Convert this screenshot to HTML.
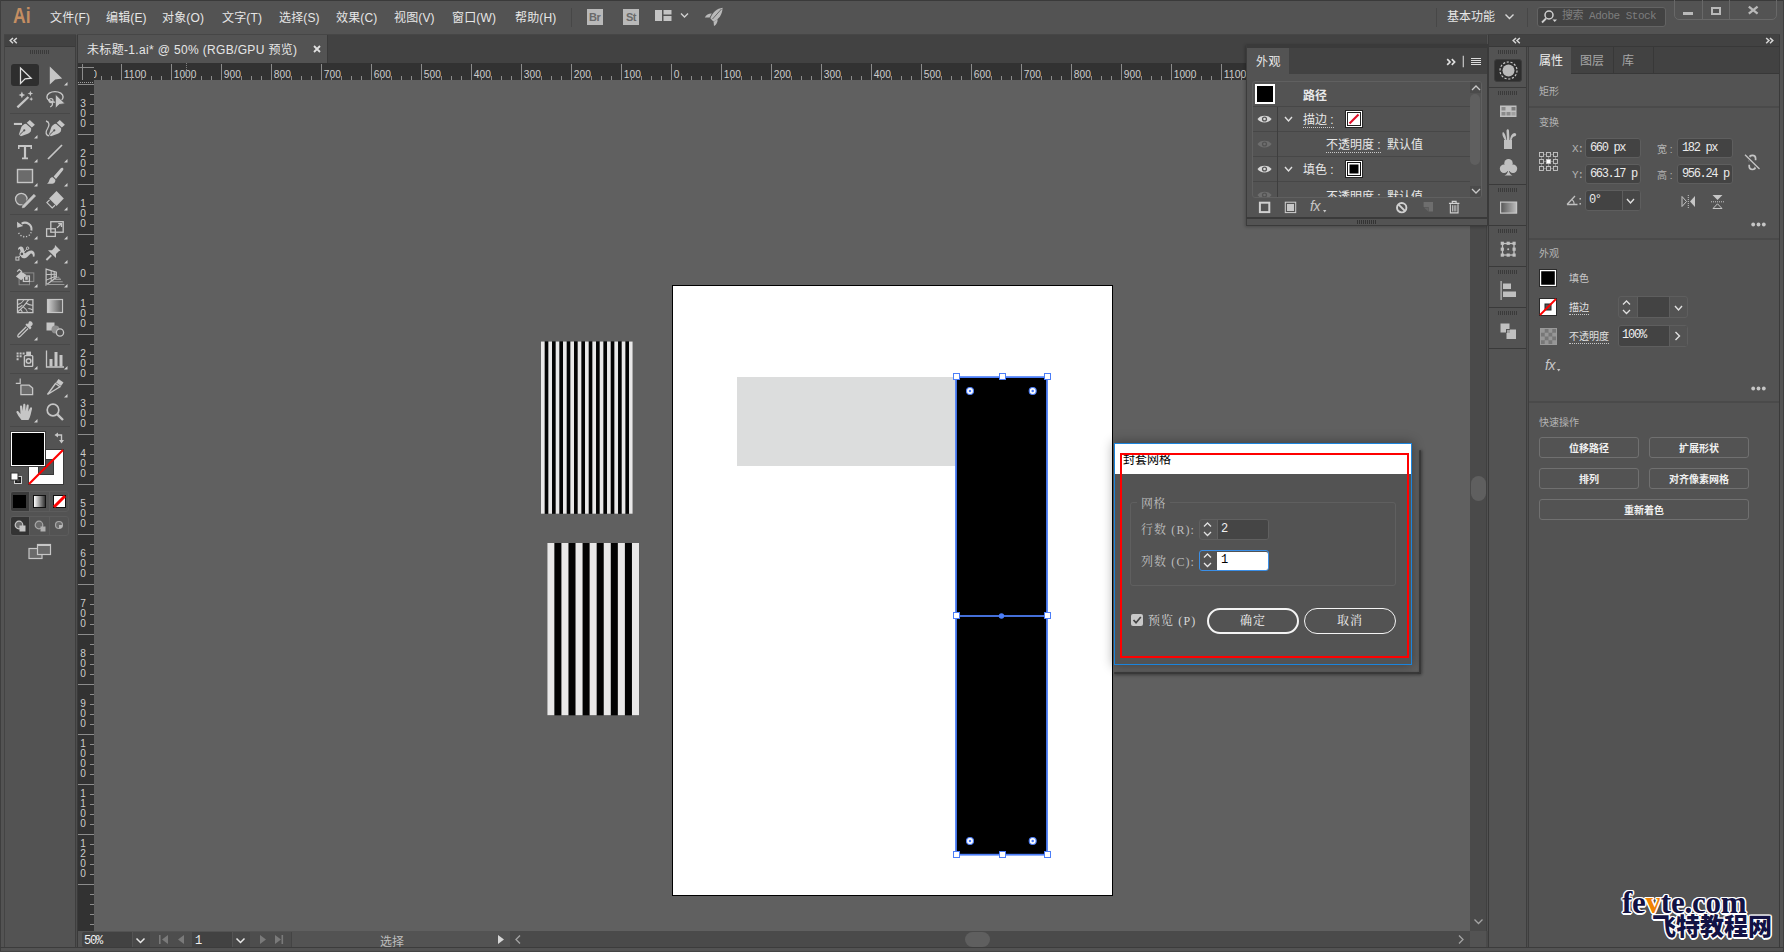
<!DOCTYPE html>
<html lang="zh-CN"><head><meta charset="utf-8"><title>Illustrator</title>
<style>
*{margin:0;padding:0;box-sizing:border-box}
html,body{width:1784px;height:952px;overflow:hidden;background:#535353;font-family:"Liberation Sans","Noto Sans CJK SC",sans-serif;font-size:12px;color:#ddd}
body div,body svg{position:absolute}
svg{overflow:visible}
svg text{font-family:"Liberation Sans","Noto Sans CJK SC",sans-serif}
</style></head>
<body>
<div style="left:0px;top:0px;width:1784px;height:1px;background:#3a3a3a;"></div>
<div style="left:0px;top:0px;width:1px;height:952px;background:#3e3e3e;"></div>
<div style="left:1783px;top:0px;width:1px;height:952px;background:#3e3e3e;"></div>
<div style="left:0px;top:951px;width:1784px;height:1px;background:#444;"></div>
<div style="left:12.5px;top:3px;font-size:22px;color:#c48e62;line-height:26px;white-space:nowrap;font-family:'Liberation Sans','Noto Sans CJK SC',sans-serif;font-weight:bold;line-height:26px;transform:scaleX(0.8);transform-origin:0 0;">Ai</div>
<div style="left:50px;top:10px;font-size:12px;color:#e6e6e6;line-height:16px;white-space:nowrap;font-family:'Liberation Sans','Noto Sans CJK SC',sans-serif;line-height:17px;letter-spacing:0.15px;">文件(F)</div>
<div style="left:106px;top:10px;font-size:12px;color:#e6e6e6;line-height:16px;white-space:nowrap;font-family:'Liberation Sans','Noto Sans CJK SC',sans-serif;line-height:17px;letter-spacing:0.15px;">编辑(E)</div>
<div style="left:162px;top:10px;font-size:12px;color:#e6e6e6;line-height:16px;white-space:nowrap;font-family:'Liberation Sans','Noto Sans CJK SC',sans-serif;line-height:17px;letter-spacing:0.15px;">对象(O)</div>
<div style="left:222px;top:10px;font-size:12px;color:#e6e6e6;line-height:16px;white-space:nowrap;font-family:'Liberation Sans','Noto Sans CJK SC',sans-serif;line-height:17px;letter-spacing:0.15px;">文字(T)</div>
<div style="left:279px;top:10px;font-size:12px;color:#e6e6e6;line-height:16px;white-space:nowrap;font-family:'Liberation Sans','Noto Sans CJK SC',sans-serif;line-height:17px;letter-spacing:0.15px;">选择(S)</div>
<div style="left:336px;top:10px;font-size:12px;color:#e6e6e6;line-height:16px;white-space:nowrap;font-family:'Liberation Sans','Noto Sans CJK SC',sans-serif;line-height:17px;letter-spacing:0.15px;">效果(C)</div>
<div style="left:394px;top:10px;font-size:12px;color:#e6e6e6;line-height:16px;white-space:nowrap;font-family:'Liberation Sans','Noto Sans CJK SC',sans-serif;line-height:17px;letter-spacing:0.15px;">视图(V)</div>
<div style="left:452px;top:10px;font-size:12px;color:#e6e6e6;line-height:16px;white-space:nowrap;font-family:'Liberation Sans','Noto Sans CJK SC',sans-serif;line-height:17px;letter-spacing:0.15px;">窗口(W)</div>
<div style="left:515px;top:10px;font-size:12px;color:#e6e6e6;line-height:16px;white-space:nowrap;font-family:'Liberation Sans','Noto Sans CJK SC',sans-serif;line-height:17px;letter-spacing:0.15px;">帮助(H)</div>
<div style="left:571px;top:8px;width:1px;height:19px;background:#474747;"></div>
<div style="left:587px;top:9px;width:16px;height:16px;background:#b9b9b9;"><span style="position:absolute;left:2px;top:2px;font-size:11px;line-height:13px;font-weight:bold;color:#6a6a6a;letter-spacing:-0.5px">Br</span></div>
<div style="left:623px;top:9px;width:16px;height:16px;background:#b9b9b9;"><span style="position:absolute;left:3px;top:2px;font-size:11px;line-height:13px;font-weight:bold;color:#6a6a6a;letter-spacing:-0.5px">St</span></div>
<svg style="left:654px;top:9px" width="40" height="14"><rect x="1" y="1" width="7" height="11" fill="#c4c4c4"/><rect x="9.5" y="1" width="8" height="4.5" fill="#c4c4c4"/><rect x="9.5" y="7" width="8" height="5" fill="#c4c4c4"/><path d="M27 4.5 L30.5 8 L34 4.5" fill="none" stroke="#d0d0d0" stroke-width="1.4"/></svg>
<svg style="left:704px;top:7px" width="20" height="20" viewBox="0 0 20 20"><path d="M18.6 0.8 C13 1.5 8.5 5.5 6.3 11.3 L9.3 14.6 C15 12.6 18.3 7.5 18.6 0.8 Z" fill="#b9b9b9"/><path d="M7.8 6.6 C4.8 6.4 2.2 8 0.8 10.4 L5.6 10.6 Z" fill="#b9b9b9"/><path d="M13.6 12.2 C13.8 15.2 12.3 17.8 10 19 L9.6 14.8 Z" fill="#b9b9b9"/><path d="M17.5 2 L8.5 12" stroke="#535353" stroke-width="0.8"/></svg>
<div style="left:1436px;top:8px;width:1px;height:19px;background:#474747;"></div>
<div style="left:1447px;top:9px;font-size:12px;color:#e6e6e6;line-height:16px;white-space:nowrap;font-family:'Liberation Sans','Noto Sans CJK SC',sans-serif;line-height:17px;">基本功能</div>
<svg style="left:1504px;top:13px" width="12" height="8"><path d="M1.5 1.5 L5.5 5.5 L9.5 1.5" fill="none" stroke="#d8d8d8" stroke-width="1.4"/></svg>
<div style="left:1527px;top:8px;width:1px;height:19px;background:#474747;"></div>
<div style="left:1537px;top:7px;width:129px;height:20px;background:#434343;border:1px solid #636363;border-radius:3px;"></div>
<svg style="left:1540px;top:9px" width="18" height="16"><circle cx="9" cy="6" r="4" fill="none" stroke="#d0d0d0" stroke-width="1.5"/><path d="M6 9.5 L2 13.5" stroke="#d0d0d0" stroke-width="1.8"/><path d="M12.5 10.5 L17 10.5 L14.75 13 Z" fill="#d0d0d0"/></svg>
<div style="left:1562px;top:9px;font-size:11px;color:#7e7e7e;line-height:15px;white-space:nowrap;font-family:'Liberation Mono','Noto Sans CJK SC',monospace;line-height:15px;letter-spacing:-0.5px;">搜索 Adobe Stock</div>
<div style="left:1674px;top:-2px;width:103px;height:22px;border:1px solid #686868;border-radius:0 0 5px 5px;"></div>
<div style="left:1702px;top:0px;width:1px;height:19px;background:#686868;"></div>
<div style="left:1729px;top:0px;width:1px;height:19px;background:#686868;"></div>
<div style="left:1683px;top:12px;width:10px;height:3px;background:#b9b9b9;"></div>
<div style="left:1711px;top:7px;width:10px;height:8px;border:2px solid #b9b9b9;"></div>
<svg style="left:1747px;top:5px" width="12" height="10"><path d="M1.8 1.6 L10.6 8.6 M10.6 1.6 L1.8 8.6" stroke="#b9b9b9" stroke-width="2.3"/></svg>
<div style="left:4px;top:34px;width:72px;height:1px;background:#464646;"></div>
<div style="left:77px;top:34px;width:1411px;height:1px;background:#464646;"></div>
<div style="left:1488px;top:34px;width:292px;height:1px;background:#404040;"></div>
<div style="left:4px;top:35px;width:1px;height:913px;background:#444;"></div>
<div style="left:75px;top:35px;width:1px;height:913px;background:#3e3e3e;"></div>
<div style="left:76px;top:35px;width:1px;height:913px;background:#4d4d4d;"></div>
<div style="left:5px;top:35px;width:70px;height:12px;background:#424242;"></div>
<div style="left:5px;top:46px;width:70px;height:1px;background:#3a3a3a;"></div>
<svg style="left:9px;top:37px" width="10" height="8"><path d="M4 1 L1.2 3.6 L4 6.2 M7.8 1 L5 3.6 L7.8 6.2" fill="none" stroke="#d6d6d6" stroke-width="1.5"/></svg>
<svg style="left:30px;top:50px" width="20" height="4"><rect x="0" y="0" width="1" height="4" fill="#3a3a3a"/><rect x="2" y="0" width="1" height="4" fill="#3a3a3a"/><rect x="4" y="0" width="1" height="4" fill="#3a3a3a"/><rect x="6" y="0" width="1" height="4" fill="#3a3a3a"/><rect x="8" y="0" width="1" height="4" fill="#3a3a3a"/><rect x="10" y="0" width="1" height="4" fill="#3a3a3a"/><rect x="12" y="0" width="1" height="4" fill="#3a3a3a"/><rect x="14" y="0" width="1" height="4" fill="#3a3a3a"/><rect x="16" y="0" width="1" height="4" fill="#3a3a3a"/><rect x="18" y="0" width="1" height="4" fill="#3a3a3a"/></svg>
<div style="left:11px;top:64px;width:28px;height:22px;background:#2e2e2e;border-radius:3px;"></div>
<svg style="left:13px;top:63px" width="24" height="24" viewBox="0 0 24 24"><path d="M7.5 5 V20.4 L12.1 15.9 L18.2 15.2 Z" fill="none" stroke="#e0e0e0" stroke-width="1.25" stroke-linejoin="miter"/></svg>
<svg style="left:43px;top:63px" width="24" height="24" viewBox="0 0 24 24"><path d="M6.8 3.6 V21.5 L12.2 16.4 L19.2 15.5 Z" fill="#c6c6c6"/></svg>
<svg style="left:64.3px;top:81.6px" width="4" height="4"><path d="M3.5 0 V3.5 H0 Z" fill="#d0d0d0"/></svg>
<svg style="left:13px;top:88px" width="24" height="24" viewBox="0 0 24 24"><path d="M4.4 19.4 L15.4 9" stroke="#c6c6c6" stroke-width="2.3"/><path d="M8.9 3.6 L9.9 5.9 L12.2 6.9 L9.9 7.9 L8.9 10.2 L7.9 7.9 L5.6 6.9 L7.9 5.9 Z" fill="#c6c6c6"/><path d="M17.4 2.7 L18.2 4.7 L20.2 5.5 L18.2 6.3 L17.4 8.3 L16.6 6.3 L14.6 5.5 L16.6 4.7 Z" fill="#c6c6c6"/><path d="M18.2 9.1 L18.8 10.5 L20.2 11.1 L18.8 11.7 L18.2 13.1 L17.6 11.7 L16.2 11.1 L17.6 10.5 Z" fill="#c6c6c6"/></svg>
<svg style="left:43px;top:88px" width="24" height="24" viewBox="0 0 24 24"><ellipse cx="12" cy="8.9" rx="8.1" ry="5.3" fill="none" stroke="#c6c6c6" stroke-width="1.4"/><circle cx="8" cy="12.6" r="2" fill="none" stroke="#c6c6c6" stroke-width="1.2"/><path d="M9 14.4 C10.2 16.2 9.2 18.2 7.2 18.9" fill="none" stroke="#c6c6c6" stroke-width="1.3"/><path d="M12.3 6 V20.6 L16.3 16.5 L22.2 15.7 Z" fill="#c6c6c6" stroke="#535353" stroke-width="0.9"/></svg>
<svg style="left:13px;top:116px" width="24" height="24" viewBox="0 0 24 24"><rect x="0.9" y="6.9" width="8.1" height="2.1" fill="#c6c6c6"/><path d="M16.8 3.9 L21.9 8.7 L18.8 11.4 L13.7 6.8 Z" fill="#c6c6c6"/><path d="M13.0 7.7 L18.1 12.3 C18.5 14.6 17.4 16.6 15.4 17.5 L8 20.3 L5.8 18.7 L8.2 11.4 C9 9.3 10.9 7.9 13.0 7.7 Z" fill="#c6c6c6"/><path d="M6.4 19.1 L11 14.6" stroke="#535353" stroke-width="1"/><circle cx="11.3" cy="14.3" r="1.1" fill="#535353"/></svg>
<svg style="left:34.3px;top:134.6px" width="4" height="4"><path d="M3.5 0 V3.5 H0 Z" fill="#d0d0d0"/></svg>
<svg style="left:43px;top:116px" width="24" height="24" viewBox="0 0 24 24"><path d="M16.8 3.9 L21.9 8.7 L18.8 11.4 L13.7 6.8 Z" fill="#c6c6c6"/><path d="M13.0 7.7 L18.1 12.3 C18.5 14.6 17.4 16.6 15.4 17.5 L8 20.3 L5.8 18.7 L8.2 11.4 C9 9.3 10.9 7.9 13.0 7.7 Z" fill="#c6c6c6"/><path d="M6.4 19.1 L11 14.6" stroke="#535353" stroke-width="1"/><circle cx="11.3" cy="14.3" r="1.1" fill="#535353"/><path d="M3 5 C6.8 6 6.5 9.5 4.6 12.5 C2.6 15.5 2.2 19.3 6.2 19.8" fill="none" stroke="#c6c6c6" stroke-width="1.3"/></svg>
<svg style="left:13px;top:140px" width="24" height="24" viewBox="0 0 24 24"><path d="M5 5 H19 V9 H17.5 V7 H13.1 V17.6 H15 V19.2 H9 V17.6 H10.9 V7 H6.5 V9 H5 Z" fill="#c6c6c6"/></svg>
<svg style="left:34.3px;top:158.6px" width="4" height="4"><path d="M3.5 0 V3.5 H0 Z" fill="#d0d0d0"/></svg>
<svg style="left:43px;top:140px" width="24" height="24" viewBox="0 0 24 24"><path d="M5 19 L19 5" stroke="#c6c6c6" stroke-width="1.7"/></svg>
<svg style="left:64.3px;top:158.6px" width="4" height="4"><path d="M3.5 0 V3.5 H0 Z" fill="#d0d0d0"/></svg>
<svg style="left:13px;top:164px" width="24" height="24" viewBox="0 0 24 24"><rect x="4.5" y="5.5" width="15" height="13" fill="#6b6b6b" stroke="#c6c6c6" stroke-width="1.4"/></svg>
<svg style="left:34.3px;top:182.6px" width="4" height="4"><path d="M3.5 0 V3.5 H0 Z" fill="#d0d0d0"/></svg>
<svg style="left:43px;top:164px" width="24" height="24" viewBox="0 0 24 24"><path d="M10.6 12.5 L17.6 4.4 C18.6 3.2 20.6 3.6 20.4 5.2 C20.3 5.8 20 6.3 19.6 6.8 L13 15 Z" fill="#c6c6c6"/><path d="M9.8 13.3 L12.3 15.7 C12.8 18 11 19.8 8.5 19.8 L4 19.8 C6 18.5 6 16.5 6.8 15 C7.5 13.8 8.6 13.2 9.8 13.3 Z" fill="#c6c6c6"/></svg>
<svg style="left:64.3px;top:182.6px" width="4" height="4"><path d="M3.5 0 V3.5 H0 Z" fill="#d0d0d0"/></svg>
<svg style="left:13px;top:188px" width="24" height="24" viewBox="0 0 24 24"><circle cx="8.3" cy="11.1" r="5.8" fill="#6b6b6b" stroke="#c6c6c6" stroke-width="1.3"/><path d="M20.6 5.2 L23.6 8.2 L11.6 20.4 L8 21 L8.6 17.4 Z" fill="#535353"/><path d="M20.9 6.3 L22.6 8 L11.4 19.4 L9.2 19.8 L9.6 17.8 Z" fill="#c6c6c6" stroke="#c6c6c6" stroke-width="0.6"/></svg>
<svg style="left:34.3px;top:206.6px" width="4" height="4"><path d="M3.5 0 V3.5 H0 Z" fill="#d0d0d0"/></svg>
<svg style="left:43px;top:188px" width="24" height="24" viewBox="0 0 24 24"><path d="M13.5 3.1 L20.8 10.6 L13.5 17.9 L6.1 10.6 Z" fill="#c6c6c6"/><path d="M6.6 11.9 L3.9 14.6 L9.2 20 L12 17.3" fill="none" stroke="#c6c6c6" stroke-width="1.2"/></svg>
<svg style="left:64.3px;top:206.6px" width="4" height="4"><path d="M3.5 0 V3.5 H0 Z" fill="#d0d0d0"/></svg>
<svg style="left:13px;top:217px" width="24" height="24" viewBox="0 0 24 24"><path d="M8.6 6.6 A6.6 6.6 0 0 1 18.4 13.5" fill="none" stroke="#c6c6c6" stroke-width="2"/><path d="M4 4.8 L4.2 10.8 L10.2 9 Z" fill="#c6c6c6"/><path d="M18.2 15.2 A6.8 6.8 0 0 1 5.2 14.6" fill="none" stroke="#c6c6c6" stroke-width="1.4" stroke-dasharray="1.2 1.7"/></svg>
<svg style="left:34.3px;top:235.6px" width="4" height="4"><path d="M3.5 0 V3.5 H0 Z" fill="#d0d0d0"/></svg>
<svg style="left:43px;top:217px" width="24" height="24" viewBox="0 0 24 24"><rect x="7.8" y="4.7" width="12.4" height="10.5" fill="none" stroke="#c6c6c6" stroke-width="1.3"/><rect x="3.6" y="11.8" width="8.7" height="7.6" fill="none" stroke="#c6c6c6" stroke-width="1.3"/><path d="M14 10.9 L18.2 6.8 M15.2 6.6 H18.5 V9.9" fill="none" stroke="#c6c6c6" stroke-width="1.3"/></svg>
<svg style="left:64.3px;top:235.6px" width="4" height="4"><path d="M3.5 0 V3.5 H0 Z" fill="#d0d0d0"/></svg>
<svg style="left:13px;top:241px" width="24" height="24" viewBox="0 0 24 24"><path d="M5 8.5 C5 5.5 8.5 4.5 10 6.5 C11.5 8.5 10.5 11 12 12.5 C14 11 17 9 19.5 9.8 C22 10.8 22 14 21.3 15.8 L19.8 15.5 C20 13.5 19.3 12.3 18 12.5 C16.5 13 15 16.5 12 17.2 C9 17.8 7.8 16 7.5 14 C7.2 11.5 8 9.5 6.8 8.2 C6.3 7.8 5.8 8 5.5 9 Z" fill="#c6c6c6"/><path d="M4.3 17.5 L14.5 7.3" stroke="#c6c6c6" stroke-width="1"/><circle cx="8.9" cy="12.9" r="1.9" fill="#535353" stroke="#c6c6c6" stroke-width="1.1"/><rect x="2.9" y="16.1" width="3" height="3" fill="#535353" stroke="#c6c6c6" stroke-width="1"/><circle cx="14.6" cy="7.2" r="1.2" fill="#535353" stroke="#c6c6c6" stroke-width="1"/></svg>
<svg style="left:34.3px;top:259.6px" width="4" height="4"><path d="M3.5 0 V3.5 H0 Z" fill="#d0d0d0"/></svg>
<svg style="left:43px;top:241px" width="24" height="24" viewBox="0 0 24 24"><path d="M12 4 L17.5 9.6 L15.8 10.2 L13 13 L13 17 L5 9.3 L9 9.3 L11.8 6.2 Z" fill="#c6c6c6"/><path d="M8.3 14.2 L3.4 19" stroke="#c6c6c6" stroke-width="1.9"/></svg>
<svg style="left:64.3px;top:259.6px" width="4" height="4"><path d="M3.5 0 V3.5 H0 Z" fill="#d0d0d0"/></svg>
<svg style="left:13px;top:265px" width="24" height="24" viewBox="0 0 24 24"><rect x="10.6" y="7.9" width="10.2" height="8.5" fill="none" stroke="#8c8c8c" stroke-width="1"/><rect x="6.1" y="12.6" width="10.4" height="7.1" fill="none" stroke="#8c8c8c" stroke-width="1"/><rect x="10.4" y="11" width="6" height="5.4" fill="#535353" stroke="#c6c6c6" stroke-width="1.3"/><rect x="12.2" y="11.6" width="2.6" height="3.2" fill="#c6c6c6"/><path d="M2.9 11.6 L8 6.6 L13.4 10 L8.2 15.2 Z" fill="#c6c6c6"/><path d="M4.2 6.6 L6.2 4.6 L9 6.8" fill="none" stroke="#c6c6c6" stroke-width="1.3"/></svg>
<svg style="left:34.3px;top:283.6px" width="4" height="4"><path d="M3.5 0 V3.5 H0 Z" fill="#d0d0d0"/></svg>
<svg style="left:43px;top:265px" width="24" height="24" viewBox="0 0 24 24"><path d="M3.1 4.1 V19.9 L13.3 12.6 V7.1 Z" fill="none" stroke="#c6c6c6" stroke-width="1.2"/><path d="M3.1 9.6 L13.3 9.2 M3.1 15.2 L13.3 11 M8.2 5.6 V16.2 M11.2 6.5 V14.1" stroke="#c6c6c6" stroke-width="1"/><path d="M11.2 14.4 H18 M8.7 16.8 H19.7 M3.1 19.5 H21.4" stroke="#9a9a9a" stroke-width="1.1"/><path d="M13.3 12.8 L18 14.2 L15.2 11.2 Z" fill="#8c8c8c"/></svg>
<svg style="left:64.3px;top:283.6px" width="4" height="4"><path d="M3.5 0 V3.5 H0 Z" fill="#d0d0d0"/></svg>
<svg style="left:13px;top:294px" width="24" height="24" viewBox="0 0 24 24"><rect x="4.5" y="5.6" width="15.4" height="13" fill="none" stroke="#c6c6c6" stroke-width="1.3"/><path d="M4.6 17.8 C9 14.5 13 9.5 15.6 5.6 M4.6 10.4 C7.5 9.8 9.8 8 10.8 5.6 M4.6 14 C6.5 13.6 8 12.6 9.4 11.2 M10 12.6 C12.2 14 14 16.4 14.6 18.6 M12.8 9 C15 10.4 18 11.4 19.8 11.2 M7.6 15.4 C8.6 16.4 9.2 17.6 9.4 18.6 M15.4 14.4 C17 14.6 18.6 15.2 19.8 16" fill="none" stroke="#c6c6c6" stroke-width="1.05"/></svg>
<svg style="left:43px;top:294px" width="24" height="24" viewBox="0 0 24 24"><defs><linearGradient id="tg" x1="0" x2="1"><stop offset="0" stop-color="#d0d0d0"/><stop offset="1" stop-color="#555"/></linearGradient></defs><rect x="4.5" y="5.5" width="15" height="13" fill="url(#tg)" stroke="#c6c6c6" stroke-width="1.2"/></svg>
<svg style="left:13px;top:318px" width="24" height="24" viewBox="0 0 24 24"><path d="M16 3.6 C18 2.4 20.6 5 19.4 7 L17.6 8.8 L18.6 9.8 L17 11.4 L12.4 6.8 L14 5.2 L15 6.2 Z" fill="#c6c6c6"/><path d="M13.3 8.7 L5.2 16.8 C4 18.2 5.6 19.8 7 18.6 L15.1 10.5" fill="none" stroke="#c6c6c6" stroke-width="1.3"/></svg>
<svg style="left:34.3px;top:336.6px" width="4" height="4"><path d="M3.5 0 V3.5 H0 Z" fill="#d0d0d0"/></svg>
<svg style="left:43px;top:318px" width="24" height="24" viewBox="0 0 24 24"><rect x="3.5" y="4.5" width="8" height="8" fill="#c6c6c6"/><circle cx="12.5" cy="11.5" r="4" fill="#8e8e8e"/><circle cx="17" cy="14.5" r="3.6" fill="#535353" stroke="#c6c6c6" stroke-width="1.3"/></svg>
<svg style="left:13px;top:347px" width="24" height="24" viewBox="0 0 24 24"><rect x="11.4" y="8.6" width="8.3" height="10.8" rx="0.8" fill="none" stroke="#c6c6c6" stroke-width="1.4"/><rect x="13.2" y="4.6" width="4.8" height="3.6" fill="#c6c6c6"/><circle cx="15.6" cy="14" r="2.3" fill="none" stroke="#c6c6c6" stroke-width="1.5"/><path d="M3.6 5.4 h2 v2 h-2 Z M6.6 5.4 h2 v2 h-2 Z M9.6 5.4 h2 v2 h-2 Z M3.6 8.3 h2 v2 h-2 Z M6.6 8.3 h2 v2 h-2 Z M3.6 11.2 h2 v2 h-2 Z" fill="#c6c6c6"/></svg>
<svg style="left:34.3px;top:365.6px" width="4" height="4"><path d="M3.5 0 V3.5 H0 Z" fill="#d0d0d0"/></svg>
<svg style="left:43px;top:347px" width="24" height="24" viewBox="0 0 24 24"><path d="M3.5 3.5 V20 H21" fill="none" stroke="#c6c6c6" stroke-width="1.3"/><rect x="6.5" y="12" width="3" height="7.5" fill="#c6c6c6"/><rect x="11.5" y="5" width="3" height="14.5" fill="#c6c6c6"/><rect x="16.5" y="8" width="3" height="11.5" fill="#c6c6c6"/></svg>
<svg style="left:64.3px;top:365.6px" width="4" height="4"><path d="M3.5 0 V3.5 H0 Z" fill="#d0d0d0"/></svg>
<svg style="left:13px;top:375px" width="24" height="24" viewBox="0 0 24 24"><path d="M2.8 8.3 H7.6 M7.2 3.6 V9" stroke="#c6c6c6" stroke-width="1.2"/><path d="M7.9 10.2 H16.2 L19.6 13 V19.6 H7.9 Z" fill="#6b6b6b" stroke="#c6c6c6" stroke-width="1.3"/></svg>
<svg style="left:43px;top:375px" width="24" height="24" viewBox="0 0 24 24"><path d="M15.5 4 L20.5 7.5 L18 11 L13 7.5 Z" fill="#c6c6c6"/><path d="M12.5 8.5 L17 11.8 L4.5 19.5 Z" fill="none" stroke="#c6c6c6" stroke-width="1.4"/></svg>
<svg style="left:64.3px;top:393.6px" width="4" height="4"><path d="M3.5 0 V3.5 H0 Z" fill="#d0d0d0"/></svg>
<svg style="left:13px;top:400px" width="24" height="24" viewBox="0 0 24 24"><path d="M8.5 20 C6 17 4.5 14.5 3.5 12.5 C3 11.3 4.5 10.5 5.5 11.5 L7.5 14 L7 6.5 C7 5 9 5 9.2 6.5 L9.8 11 L10.2 4.8 C10.3 3.3 12.3 3.3 12.4 4.8 L12.6 11 L13.6 5.5 C13.9 4 15.8 4.3 15.7 5.8 L15.3 11.5 L17 8 C17.7 6.7 19.4 7.5 19 9 C18 12.5 17.5 17 15.5 20 Z" fill="#c6c6c6"/></svg>
<svg style="left:34.3px;top:418.6px" width="4" height="4"><path d="M3.5 0 V3.5 H0 Z" fill="#d0d0d0"/></svg>
<svg style="left:43px;top:400px" width="24" height="24" viewBox="0 0 24 24"><circle cx="10" cy="10" r="5.8" fill="none" stroke="#c6c6c6" stroke-width="1.7"/><path d="M14.3 14.3 L20 20" stroke="#c6c6c6" stroke-width="2.4"/></svg>
<div style="left:10px;top:113px;width:60px;height:1px;background:#484848;"></div>
<div style="left:10px;top:214px;width:60px;height:1px;background:#484848;"></div>
<div style="left:10px;top:291px;width:60px;height:1px;background:#484848;"></div>
<div style="left:10px;top:344px;width:60px;height:1px;background:#484848;"></div>
<div style="left:10px;top:373px;width:60px;height:1px;background:#484848;"></div>
<div style="left:10px;top:426px;width:60px;height:1px;background:#484848;"></div>
<svg style="left:28px;top:449px" width="37" height="37" viewBox="0 0 37 37"><rect x="0.5" y="0.5" width="35" height="35" fill="#fff" stroke="#3a3a3a" stroke-width="1"/><rect x="10.5" y="10.5" width="15" height="15" fill="#535353" stroke="#3a3a3a" stroke-width="1"/><path d="M1 35 L35 1" stroke="#ff0000" stroke-width="2.2"/></svg>
<div style="left:10px;top:431px;width:36px;height:36px;background:#000;border:1px solid #3a3a3a;box-shadow:inset 0 0 0 1px #fff;"></div>
<svg style="left:54px;top:432px" width="12" height="12" viewBox="0 0 12 12"><path d="M3 3 H7.5 V8.5" fill="none" stroke="#c6c6c6" stroke-width="1.4"/><path d="M0.5 3 L4 0.5 V5.5 Z M7.5 11.5 L5 8 H10 Z" fill="#c6c6c6"/></svg>
<svg style="left:10px;top:472px" width="13" height="13" viewBox="0 0 13 13"><rect x="4.5" y="4.5" width="7" height="7" fill="#222" stroke="#d0d0d0" stroke-width="1"/><rect x="7" y="7" width="2.4" height="2.4" fill="#535353"/><rect x="1" y="1" width="7" height="7" fill="#fff" stroke="#333" stroke-width="1"/></svg>
<div style="left:10px;top:491px;width:59px;height:21px;border:1px solid #5c5c5c;border-radius:3px;"></div>
<div style="left:11px;top:492px;width:18px;height:19px;background:#3a3a3a;border-radius:2px 0 0 2px;"></div>
<div style="left:29px;top:492px;width:1px;height:19px;background:#5c5c5c;"></div>
<div style="left:49px;top:492px;width:1px;height:19px;background:#5c5c5c;"></div>
<div style="left:13px;top:495px;width:13px;height:13px;background:#000;"></div>
<div style="left:33px;top:495px;width:13px;height:13px;background:linear-gradient(90deg,#fff,#333);border:1px solid #111;"></div>
<svg style="left:53px;top:495px" width="13" height="13"><rect x="0.5" y="0.5" width="12" height="12" fill="#fff" stroke="#111"/><path d="M1 12 L12 1" stroke="#ff0000" stroke-width="3"/></svg>
<div style="left:10px;top:516px;width:59px;height:20px;border:1px solid #5c5c5c;border-radius:3px;"></div>
<div style="left:11px;top:517px;width:18px;height:18px;background:#333;border-radius:2px 0 0 2px;"></div>
<div style="left:29px;top:517px;width:1px;height:18px;background:#5c5c5c;"></div>
<div style="left:49px;top:517px;width:1px;height:18px;background:#5c5c5c;"></div>
<svg style="left:14px;top:520px" width="13" height="13"><circle cx="5" cy="5" r="3.8" fill="#6a6a6a" stroke="#c6c6c6" stroke-width="1.2"/><rect x="5.5" y="5.5" width="6" height="6" fill="#c6c6c6"/></svg>
<svg style="left:34px;top:520px" width="13" height="13"><circle cx="5" cy="5" r="3.8" fill="#6a6a6a" stroke="#a8a8a8" stroke-width="1.2"/><rect x="6.5" y="6.5" width="5" height="5" fill="#b0b0b0"/></svg>
<svg style="left:54px;top:520px" width="13" height="13"><circle cx="5" cy="5" r="3.5" fill="#6a6a6a" stroke="#a8a8a8" stroke-width="1.2"/><path d="M5 5 H8.5 A3.5 3.5 0 0 1 5 8.5 Z" fill="#b8b8b8"/></svg>
<svg style="left:28px;top:543px" width="24" height="18"><rect x="1" y="5.5" width="13" height="10" fill="#6a6a6a" stroke="#c6c6c6" stroke-width="1.2"/><rect x="9.5" y="1.5" width="13" height="10" fill="#6a6a6a" stroke="#c6c6c6" stroke-width="1.2"/><rect x="9.5" y="1" width="13" height="2" fill="#c6c6c6"/></svg>
<div style="left:77px;top:35px;width:1411px;height:28px;background:#424242;"></div>
<div style="left:77px;top:35px;width:1px;height:913px;background:#3a3a3a;"></div>
<div style="left:78px;top:35px;width:249px;height:28px;background:#535353;"></div>
<div style="left:327px;top:35px;width:1px;height:28px;background:#3a3a3a;"></div>
<div style="left:87px;top:42px;font-size:12px;color:#e6e6e6;line-height:16px;white-space:nowrap;font-family:'Liberation Sans','Noto Sans CJK SC',sans-serif;line-height:17px;letter-spacing:0.34px;">未标题-1.ai* @ 50% (RGB/GPU 预览)</div>
<svg style="left:313px;top:45px" width="8" height="8"><path d="M1 1 L7 7 M7 1 L1 7" stroke="#e0e0e0" stroke-width="1.8"/></svg>
<div style="left:94px;top:80px;width:1376px;height:851px;background:#606060;"></div>
<div style="left:1470px;top:80px;width:16px;height:851px;background:#4a4a4a;"></div>
<div style="left:1486px;top:35px;width:1px;height:913px;background:#404040;"></div>
<div style="left:1487px;top:35px;width:1px;height:913px;background:#515151;"></div>
<div style="left:1471px;top:476px;width:15px;height:25px;background:#5f5f5f;border-radius:7.5px;"></div>
<svg style="left:1473px;top:918px" width="12" height="8"><path d="M1.5 1.5 L5.5 5.5 L9.5 1.5" fill="none" stroke="#a4a4a4" stroke-width="1.3"/></svg>
<div style="left:672px;top:285px;width:441px;height:611px;background:#ffffff;border:1px solid #000;"></div>
<div style="left:737px;top:377px;width:219px;height:89px;background:#dcdddd;"></div>
<div style="left:956px;top:377px;width:91px;height:478px;background:#000;"></div>
<svg style="left:541px;top:341px" width="93" height="173" viewBox="0 0 93 173"><rect x="0" y="0.4" width="91.7" height="172.4" fill="#030303"/><rect x="0.00" y="0.4" width="3.67" height="172.4" fill="#e9e8e8"/><rect x="7.34" y="0.4" width="3.67" height="172.4" fill="#e9e8e8"/><rect x="14.67" y="0.4" width="3.67" height="172.4" fill="#e9e8e8"/><rect x="22.01" y="0.4" width="3.67" height="172.4" fill="#e9e8e8"/><rect x="29.34" y="0.4" width="3.67" height="172.4" fill="#e9e8e8"/><rect x="36.68" y="0.4" width="3.67" height="172.4" fill="#e9e8e8"/><rect x="44.02" y="0.4" width="3.67" height="172.4" fill="#e9e8e8"/><rect x="51.35" y="0.4" width="3.67" height="172.4" fill="#e9e8e8"/><rect x="58.69" y="0.4" width="3.67" height="172.4" fill="#e9e8e8"/><rect x="66.02" y="0.4" width="3.67" height="172.4" fill="#e9e8e8"/><rect x="73.36" y="0.4" width="3.67" height="172.4" fill="#e9e8e8"/><rect x="80.70" y="0.4" width="3.67" height="172.4" fill="#e9e8e8"/><rect x="88.03" y="0.4" width="3.67" height="172.4" fill="#e9e8e8"/></svg>
<svg style="left:547px;top:543px" width="93" height="174" viewBox="0 0 93 174"><rect x="0.3" y="0" width="91.7" height="172.3" fill="#030303"/><rect x="0.30" y="0" width="7.05" height="172.3" fill="#e9e8e8"/><rect x="14.41" y="0" width="7.05" height="172.3" fill="#e9e8e8"/><rect x="28.52" y="0" width="7.05" height="172.3" fill="#e9e8e8"/><rect x="42.62" y="0" width="7.05" height="172.3" fill="#e9e8e8"/><rect x="56.73" y="0" width="7.05" height="172.3" fill="#e9e8e8"/><rect x="70.84" y="0" width="7.05" height="172.3" fill="#e9e8e8"/><rect x="84.95" y="0" width="7.05" height="172.3" fill="#e9e8e8"/></svg>
<svg style="left:940px;top:360px" width="130" height="510" viewBox="940 360 130 510"><rect x="956" y="377.1" width="91" height="477.6" fill="none" stroke="#4c7ef8" stroke-width="1.8"/><path d="M956 616 H1047" stroke="#446fd8" stroke-width="1.9"/><circle cx="1001.5" cy="616" r="2.7" fill="#4c7ef8"/><rect x="953.5" y="373.5" width="6" height="6" fill="#fff" stroke="#4c7ef8" stroke-width="1"/><rect x="953.5" y="612.5" width="6" height="6" fill="#fff" stroke="#4c7ef8" stroke-width="1"/><rect x="953.5" y="851.5" width="6" height="6" fill="#fff" stroke="#4c7ef8" stroke-width="1"/><rect x="999.5" y="373.5" width="6" height="6" fill="#fff" stroke="#4c7ef8" stroke-width="1"/><rect x="999.5" y="851.5" width="6" height="6" fill="#fff" stroke="#4c7ef8" stroke-width="1"/><rect x="1044.5" y="373.5" width="6" height="6" fill="#fff" stroke="#4c7ef8" stroke-width="1"/><rect x="1044.5" y="612.5" width="6" height="6" fill="#fff" stroke="#4c7ef8" stroke-width="1"/><rect x="1044.5" y="851.5" width="6" height="6" fill="#fff" stroke="#4c7ef8" stroke-width="1"/><circle cx="970" cy="391" r="3.5" fill="#fff" stroke="#4c7ef8" stroke-width="1.1"/><circle cx="970" cy="391" r="1.25" fill="#4c7ef8"/><circle cx="1032.7" cy="391" r="3.5" fill="#fff" stroke="#4c7ef8" stroke-width="1.1"/><circle cx="1032.7" cy="391" r="1.25" fill="#4c7ef8"/><circle cx="970" cy="841" r="3.5" fill="#fff" stroke="#4c7ef8" stroke-width="1.1"/><circle cx="970" cy="841" r="1.25" fill="#4c7ef8"/><circle cx="1032.7" cy="841" r="3.5" fill="#fff" stroke="#4c7ef8" stroke-width="1.1"/><circle cx="1032.7" cy="841" r="1.25" fill="#4c7ef8"/></svg>
<svg style="left:78px;top:63px" width="1410" height="17" viewBox="78 63 1410 17"><rect x="78" y="63" width="1410" height="17" fill="#323232"/><rect x="121" y="64" width="1" height="16" fill="#8c8c8c"/><text x="123.8" y="78" font-size="11" fill="#cdcdcd" textLength="22.6" lengthAdjust="spacingAndGlyphs">1100</text><rect x="131" y="76" width="1" height="4" fill="#8c8c8c"/><rect x="141" y="76" width="1" height="4" fill="#8c8c8c"/><rect x="151" y="76" width="1" height="4" fill="#8c8c8c"/><rect x="161" y="76" width="1" height="4" fill="#8c8c8c"/><rect x="171" y="64" width="1" height="16" fill="#8c8c8c"/><text x="173.8" y="78" font-size="11" fill="#cdcdcd" textLength="22.6" lengthAdjust="spacingAndGlyphs">1000</text><rect x="181" y="76" width="1" height="4" fill="#8c8c8c"/><rect x="191" y="76" width="1" height="4" fill="#8c8c8c"/><rect x="201" y="76" width="1" height="4" fill="#8c8c8c"/><rect x="211" y="76" width="1" height="4" fill="#8c8c8c"/><rect x="221" y="64" width="1" height="16" fill="#8c8c8c"/><text x="223.8" y="78" font-size="11" fill="#cdcdcd" textLength="17.0" lengthAdjust="spacingAndGlyphs">900</text><rect x="231" y="76" width="1" height="4" fill="#8c8c8c"/><rect x="241" y="76" width="1" height="4" fill="#8c8c8c"/><rect x="251" y="76" width="1" height="4" fill="#8c8c8c"/><rect x="261" y="76" width="1" height="4" fill="#8c8c8c"/><rect x="271" y="64" width="1" height="16" fill="#8c8c8c"/><text x="273.8" y="78" font-size="11" fill="#cdcdcd" textLength="17.0" lengthAdjust="spacingAndGlyphs">800</text><rect x="281" y="76" width="1" height="4" fill="#8c8c8c"/><rect x="291" y="76" width="1" height="4" fill="#8c8c8c"/><rect x="301" y="76" width="1" height="4" fill="#8c8c8c"/><rect x="311" y="76" width="1" height="4" fill="#8c8c8c"/><rect x="321" y="64" width="1" height="16" fill="#8c8c8c"/><text x="323.8" y="78" font-size="11" fill="#cdcdcd" textLength="17.0" lengthAdjust="spacingAndGlyphs">700</text><rect x="331" y="76" width="1" height="4" fill="#8c8c8c"/><rect x="341" y="76" width="1" height="4" fill="#8c8c8c"/><rect x="351" y="76" width="1" height="4" fill="#8c8c8c"/><rect x="361" y="76" width="1" height="4" fill="#8c8c8c"/><rect x="371" y="64" width="1" height="16" fill="#8c8c8c"/><text x="373.8" y="78" font-size="11" fill="#cdcdcd" textLength="17.0" lengthAdjust="spacingAndGlyphs">600</text><rect x="381" y="76" width="1" height="4" fill="#8c8c8c"/><rect x="391" y="76" width="1" height="4" fill="#8c8c8c"/><rect x="401" y="76" width="1" height="4" fill="#8c8c8c"/><rect x="411" y="76" width="1" height="4" fill="#8c8c8c"/><rect x="421" y="64" width="1" height="16" fill="#8c8c8c"/><text x="423.8" y="78" font-size="11" fill="#cdcdcd" textLength="17.0" lengthAdjust="spacingAndGlyphs">500</text><rect x="431" y="76" width="1" height="4" fill="#8c8c8c"/><rect x="441" y="76" width="1" height="4" fill="#8c8c8c"/><rect x="451" y="76" width="1" height="4" fill="#8c8c8c"/><rect x="461" y="76" width="1" height="4" fill="#8c8c8c"/><rect x="471" y="64" width="1" height="16" fill="#8c8c8c"/><text x="473.8" y="78" font-size="11" fill="#cdcdcd" textLength="17.0" lengthAdjust="spacingAndGlyphs">400</text><rect x="481" y="76" width="1" height="4" fill="#8c8c8c"/><rect x="491" y="76" width="1" height="4" fill="#8c8c8c"/><rect x="501" y="76" width="1" height="4" fill="#8c8c8c"/><rect x="511" y="76" width="1" height="4" fill="#8c8c8c"/><rect x="521" y="64" width="1" height="16" fill="#8c8c8c"/><text x="523.8" y="78" font-size="11" fill="#cdcdcd" textLength="17.0" lengthAdjust="spacingAndGlyphs">300</text><rect x="531" y="76" width="1" height="4" fill="#8c8c8c"/><rect x="541" y="76" width="1" height="4" fill="#8c8c8c"/><rect x="551" y="76" width="1" height="4" fill="#8c8c8c"/><rect x="561" y="76" width="1" height="4" fill="#8c8c8c"/><rect x="571" y="64" width="1" height="16" fill="#8c8c8c"/><text x="573.8" y="78" font-size="11" fill="#cdcdcd" textLength="17.0" lengthAdjust="spacingAndGlyphs">200</text><rect x="581" y="76" width="1" height="4" fill="#8c8c8c"/><rect x="591" y="76" width="1" height="4" fill="#8c8c8c"/><rect x="601" y="76" width="1" height="4" fill="#8c8c8c"/><rect x="611" y="76" width="1" height="4" fill="#8c8c8c"/><rect x="621" y="64" width="1" height="16" fill="#8c8c8c"/><text x="623.8" y="78" font-size="11" fill="#cdcdcd" textLength="17.0" lengthAdjust="spacingAndGlyphs">100</text><rect x="631" y="76" width="1" height="4" fill="#8c8c8c"/><rect x="641" y="76" width="1" height="4" fill="#8c8c8c"/><rect x="651" y="76" width="1" height="4" fill="#8c8c8c"/><rect x="661" y="76" width="1" height="4" fill="#8c8c8c"/><rect x="671" y="64" width="1" height="16" fill="#8c8c8c"/><text x="673.8" y="78" font-size="11" fill="#cdcdcd" textLength="5.7" lengthAdjust="spacingAndGlyphs">0</text><rect x="681" y="76" width="1" height="4" fill="#8c8c8c"/><rect x="691" y="76" width="1" height="4" fill="#8c8c8c"/><rect x="701" y="76" width="1" height="4" fill="#8c8c8c"/><rect x="711" y="76" width="1" height="4" fill="#8c8c8c"/><rect x="721" y="64" width="1" height="16" fill="#8c8c8c"/><text x="723.8" y="78" font-size="11" fill="#cdcdcd" textLength="17.0" lengthAdjust="spacingAndGlyphs">100</text><rect x="731" y="76" width="1" height="4" fill="#8c8c8c"/><rect x="741" y="76" width="1" height="4" fill="#8c8c8c"/><rect x="751" y="76" width="1" height="4" fill="#8c8c8c"/><rect x="761" y="76" width="1" height="4" fill="#8c8c8c"/><rect x="771" y="64" width="1" height="16" fill="#8c8c8c"/><text x="773.8" y="78" font-size="11" fill="#cdcdcd" textLength="17.0" lengthAdjust="spacingAndGlyphs">200</text><rect x="781" y="76" width="1" height="4" fill="#8c8c8c"/><rect x="791" y="76" width="1" height="4" fill="#8c8c8c"/><rect x="801" y="76" width="1" height="4" fill="#8c8c8c"/><rect x="811" y="76" width="1" height="4" fill="#8c8c8c"/><rect x="821" y="64" width="1" height="16" fill="#8c8c8c"/><text x="823.8" y="78" font-size="11" fill="#cdcdcd" textLength="17.0" lengthAdjust="spacingAndGlyphs">300</text><rect x="831" y="76" width="1" height="4" fill="#8c8c8c"/><rect x="841" y="76" width="1" height="4" fill="#8c8c8c"/><rect x="851" y="76" width="1" height="4" fill="#8c8c8c"/><rect x="861" y="76" width="1" height="4" fill="#8c8c8c"/><rect x="871" y="64" width="1" height="16" fill="#8c8c8c"/><text x="873.8" y="78" font-size="11" fill="#cdcdcd" textLength="17.0" lengthAdjust="spacingAndGlyphs">400</text><rect x="881" y="76" width="1" height="4" fill="#8c8c8c"/><rect x="891" y="76" width="1" height="4" fill="#8c8c8c"/><rect x="901" y="76" width="1" height="4" fill="#8c8c8c"/><rect x="911" y="76" width="1" height="4" fill="#8c8c8c"/><rect x="921" y="64" width="1" height="16" fill="#8c8c8c"/><text x="923.8" y="78" font-size="11" fill="#cdcdcd" textLength="17.0" lengthAdjust="spacingAndGlyphs">500</text><rect x="931" y="76" width="1" height="4" fill="#8c8c8c"/><rect x="941" y="76" width="1" height="4" fill="#8c8c8c"/><rect x="951" y="76" width="1" height="4" fill="#8c8c8c"/><rect x="961" y="76" width="1" height="4" fill="#8c8c8c"/><rect x="971" y="64" width="1" height="16" fill="#8c8c8c"/><text x="973.8" y="78" font-size="11" fill="#cdcdcd" textLength="17.0" lengthAdjust="spacingAndGlyphs">600</text><rect x="981" y="76" width="1" height="4" fill="#8c8c8c"/><rect x="991" y="76" width="1" height="4" fill="#8c8c8c"/><rect x="1001" y="76" width="1" height="4" fill="#8c8c8c"/><rect x="1011" y="76" width="1" height="4" fill="#8c8c8c"/><rect x="1021" y="64" width="1" height="16" fill="#8c8c8c"/><text x="1023.8" y="78" font-size="11" fill="#cdcdcd" textLength="17.0" lengthAdjust="spacingAndGlyphs">700</text><rect x="1031" y="76" width="1" height="4" fill="#8c8c8c"/><rect x="1041" y="76" width="1" height="4" fill="#8c8c8c"/><rect x="1051" y="76" width="1" height="4" fill="#8c8c8c"/><rect x="1061" y="76" width="1" height="4" fill="#8c8c8c"/><rect x="1071" y="64" width="1" height="16" fill="#8c8c8c"/><text x="1073.8" y="78" font-size="11" fill="#cdcdcd" textLength="17.0" lengthAdjust="spacingAndGlyphs">800</text><rect x="1081" y="76" width="1" height="4" fill="#8c8c8c"/><rect x="1091" y="76" width="1" height="4" fill="#8c8c8c"/><rect x="1101" y="76" width="1" height="4" fill="#8c8c8c"/><rect x="1111" y="76" width="1" height="4" fill="#8c8c8c"/><rect x="1121" y="64" width="1" height="16" fill="#8c8c8c"/><text x="1123.8" y="78" font-size="11" fill="#cdcdcd" textLength="17.0" lengthAdjust="spacingAndGlyphs">900</text><rect x="1131" y="76" width="1" height="4" fill="#8c8c8c"/><rect x="1141" y="76" width="1" height="4" fill="#8c8c8c"/><rect x="1151" y="76" width="1" height="4" fill="#8c8c8c"/><rect x="1161" y="76" width="1" height="4" fill="#8c8c8c"/><rect x="1171" y="64" width="1" height="16" fill="#8c8c8c"/><text x="1173.8" y="78" font-size="11" fill="#cdcdcd" textLength="22.6" lengthAdjust="spacingAndGlyphs">1000</text><rect x="1181" y="76" width="1" height="4" fill="#8c8c8c"/><rect x="1191" y="76" width="1" height="4" fill="#8c8c8c"/><rect x="1201" y="76" width="1" height="4" fill="#8c8c8c"/><rect x="1211" y="76" width="1" height="4" fill="#8c8c8c"/><rect x="1221" y="64" width="1" height="16" fill="#8c8c8c"/><text x="1223.8" y="78" font-size="11" fill="#cdcdcd" textLength="22.6" lengthAdjust="spacingAndGlyphs">1100</text><rect x="1231" y="76" width="1" height="4" fill="#8c8c8c"/><rect x="1241" y="76" width="1" height="4" fill="#8c8c8c"/><rect x="1251" y="76" width="1" height="4" fill="#8c8c8c"/><rect x="1261" y="76" width="1" height="4" fill="#8c8c8c"/><rect x="1271" y="64" width="1" height="16" fill="#8c8c8c"/><text x="1273.8" y="78" font-size="11" fill="#cdcdcd" textLength="22.6" lengthAdjust="spacingAndGlyphs">1200</text><rect x="1281" y="76" width="1" height="4" fill="#8c8c8c"/><rect x="1291" y="76" width="1" height="4" fill="#8c8c8c"/><rect x="1301" y="76" width="1" height="4" fill="#8c8c8c"/><rect x="1311" y="76" width="1" height="4" fill="#8c8c8c"/><rect x="1321" y="64" width="1" height="16" fill="#8c8c8c"/><text x="1323.8" y="78" font-size="11" fill="#cdcdcd" textLength="22.6" lengthAdjust="spacingAndGlyphs">1300</text><rect x="1331" y="76" width="1" height="4" fill="#8c8c8c"/><rect x="1341" y="76" width="1" height="4" fill="#8c8c8c"/><rect x="1351" y="76" width="1" height="4" fill="#8c8c8c"/><rect x="1361" y="76" width="1" height="4" fill="#8c8c8c"/><rect x="1371" y="64" width="1" height="16" fill="#8c8c8c"/><text x="1373.8" y="78" font-size="11" fill="#cdcdcd" textLength="22.6" lengthAdjust="spacingAndGlyphs">1400</text><rect x="1381" y="76" width="1" height="4" fill="#8c8c8c"/><rect x="1391" y="76" width="1" height="4" fill="#8c8c8c"/><rect x="1401" y="76" width="1" height="4" fill="#8c8c8c"/><rect x="1411" y="76" width="1" height="4" fill="#8c8c8c"/><rect x="1421" y="64" width="1" height="16" fill="#8c8c8c"/><text x="1423.8" y="78" font-size="11" fill="#cdcdcd" textLength="22.6" lengthAdjust="spacingAndGlyphs">1500</text><rect x="1431" y="76" width="1" height="4" fill="#8c8c8c"/><rect x="1441" y="76" width="1" height="4" fill="#8c8c8c"/><rect x="1451" y="76" width="1" height="4" fill="#8c8c8c"/><rect x="1461" y="76" width="1" height="4" fill="#8c8c8c"/><rect x="1471" y="64" width="1" height="16" fill="#8c8c8c"/><text x="1473.8" y="78" font-size="11" fill="#cdcdcd" textLength="22.6" lengthAdjust="spacingAndGlyphs">1600</text><rect x="101" y="76" width="1" height="4" fill="#8c8c8c"/><rect x="111" y="76" width="1" height="4" fill="#8c8c8c"/><text x="91.3" y="78" font-size="11" fill="#cdcdcd" textLength="5.65" lengthAdjust="spacingAndGlyphs">0</text><path d="M186.5 63 V80" stroke="#808080" stroke-width="1" stroke-dasharray="1 1"/></svg>
<svg style="left:78px;top:80px" width="16" height="851" viewBox="78 80 16 851"><rect x="78" y="80" width="16" height="851" fill="#323232"/><rect x="78" y="84" width="16" height="1" fill="#8c8c8c"/><rect x="90" y="94" width="4" height="1" fill="#8c8c8c"/><rect x="90" y="104" width="4" height="1" fill="#8c8c8c"/><rect x="90" y="114" width="4" height="1" fill="#8c8c8c"/><rect x="90" y="124" width="4" height="1" fill="#8c8c8c"/><rect x="78" y="134" width="16" height="1" fill="#8c8c8c"/><rect x="90" y="144" width="4" height="1" fill="#8c8c8c"/><rect x="90" y="154" width="4" height="1" fill="#8c8c8c"/><rect x="90" y="164" width="4" height="1" fill="#8c8c8c"/><rect x="90" y="174" width="4" height="1" fill="#8c8c8c"/><text x="80.3" y="107" font-size="11" fill="#cdcdcd" textLength="5.65" lengthAdjust="spacingAndGlyphs">3</text><text x="80.3" y="117" font-size="11" fill="#cdcdcd" textLength="5.65" lengthAdjust="spacingAndGlyphs">0</text><text x="80.3" y="127" font-size="11" fill="#cdcdcd" textLength="5.65" lengthAdjust="spacingAndGlyphs">0</text><rect x="78" y="184" width="16" height="1" fill="#8c8c8c"/><rect x="90" y="194" width="4" height="1" fill="#8c8c8c"/><rect x="90" y="204" width="4" height="1" fill="#8c8c8c"/><rect x="90" y="214" width="4" height="1" fill="#8c8c8c"/><rect x="90" y="224" width="4" height="1" fill="#8c8c8c"/><text x="80.3" y="157" font-size="11" fill="#cdcdcd" textLength="5.65" lengthAdjust="spacingAndGlyphs">2</text><text x="80.3" y="167" font-size="11" fill="#cdcdcd" textLength="5.65" lengthAdjust="spacingAndGlyphs">0</text><text x="80.3" y="177" font-size="11" fill="#cdcdcd" textLength="5.65" lengthAdjust="spacingAndGlyphs">0</text><rect x="78" y="234" width="16" height="1" fill="#8c8c8c"/><rect x="90" y="244" width="4" height="1" fill="#8c8c8c"/><rect x="90" y="254" width="4" height="1" fill="#8c8c8c"/><rect x="90" y="264" width="4" height="1" fill="#8c8c8c"/><rect x="90" y="274" width="4" height="1" fill="#8c8c8c"/><text x="80.3" y="207" font-size="11" fill="#cdcdcd" textLength="5.65" lengthAdjust="spacingAndGlyphs">1</text><text x="80.3" y="217" font-size="11" fill="#cdcdcd" textLength="5.65" lengthAdjust="spacingAndGlyphs">0</text><text x="80.3" y="227" font-size="11" fill="#cdcdcd" textLength="5.65" lengthAdjust="spacingAndGlyphs">0</text><rect x="78" y="284" width="16" height="1" fill="#8c8c8c"/><rect x="90" y="294" width="4" height="1" fill="#8c8c8c"/><rect x="90" y="304" width="4" height="1" fill="#8c8c8c"/><rect x="90" y="314" width="4" height="1" fill="#8c8c8c"/><rect x="90" y="324" width="4" height="1" fill="#8c8c8c"/><text x="80.3" y="277" font-size="11" fill="#cdcdcd" textLength="5.65" lengthAdjust="spacingAndGlyphs">0</text><rect x="78" y="334" width="16" height="1" fill="#8c8c8c"/><rect x="90" y="344" width="4" height="1" fill="#8c8c8c"/><rect x="90" y="354" width="4" height="1" fill="#8c8c8c"/><rect x="90" y="364" width="4" height="1" fill="#8c8c8c"/><rect x="90" y="374" width="4" height="1" fill="#8c8c8c"/><text x="80.3" y="307" font-size="11" fill="#cdcdcd" textLength="5.65" lengthAdjust="spacingAndGlyphs">1</text><text x="80.3" y="317" font-size="11" fill="#cdcdcd" textLength="5.65" lengthAdjust="spacingAndGlyphs">0</text><text x="80.3" y="327" font-size="11" fill="#cdcdcd" textLength="5.65" lengthAdjust="spacingAndGlyphs">0</text><rect x="78" y="384" width="16" height="1" fill="#8c8c8c"/><rect x="90" y="394" width="4" height="1" fill="#8c8c8c"/><rect x="90" y="404" width="4" height="1" fill="#8c8c8c"/><rect x="90" y="414" width="4" height="1" fill="#8c8c8c"/><rect x="90" y="424" width="4" height="1" fill="#8c8c8c"/><text x="80.3" y="357" font-size="11" fill="#cdcdcd" textLength="5.65" lengthAdjust="spacingAndGlyphs">2</text><text x="80.3" y="367" font-size="11" fill="#cdcdcd" textLength="5.65" lengthAdjust="spacingAndGlyphs">0</text><text x="80.3" y="377" font-size="11" fill="#cdcdcd" textLength="5.65" lengthAdjust="spacingAndGlyphs">0</text><rect x="78" y="434" width="16" height="1" fill="#8c8c8c"/><rect x="90" y="444" width="4" height="1" fill="#8c8c8c"/><rect x="90" y="454" width="4" height="1" fill="#8c8c8c"/><rect x="90" y="464" width="4" height="1" fill="#8c8c8c"/><rect x="90" y="474" width="4" height="1" fill="#8c8c8c"/><text x="80.3" y="407" font-size="11" fill="#cdcdcd" textLength="5.65" lengthAdjust="spacingAndGlyphs">3</text><text x="80.3" y="417" font-size="11" fill="#cdcdcd" textLength="5.65" lengthAdjust="spacingAndGlyphs">0</text><text x="80.3" y="427" font-size="11" fill="#cdcdcd" textLength="5.65" lengthAdjust="spacingAndGlyphs">0</text><rect x="78" y="484" width="16" height="1" fill="#8c8c8c"/><rect x="90" y="494" width="4" height="1" fill="#8c8c8c"/><rect x="90" y="504" width="4" height="1" fill="#8c8c8c"/><rect x="90" y="514" width="4" height="1" fill="#8c8c8c"/><rect x="90" y="524" width="4" height="1" fill="#8c8c8c"/><text x="80.3" y="457" font-size="11" fill="#cdcdcd" textLength="5.65" lengthAdjust="spacingAndGlyphs">4</text><text x="80.3" y="467" font-size="11" fill="#cdcdcd" textLength="5.65" lengthAdjust="spacingAndGlyphs">0</text><text x="80.3" y="477" font-size="11" fill="#cdcdcd" textLength="5.65" lengthAdjust="spacingAndGlyphs">0</text><rect x="78" y="534" width="16" height="1" fill="#8c8c8c"/><rect x="90" y="544" width="4" height="1" fill="#8c8c8c"/><rect x="90" y="554" width="4" height="1" fill="#8c8c8c"/><rect x="90" y="564" width="4" height="1" fill="#8c8c8c"/><rect x="90" y="574" width="4" height="1" fill="#8c8c8c"/><text x="80.3" y="507" font-size="11" fill="#cdcdcd" textLength="5.65" lengthAdjust="spacingAndGlyphs">5</text><text x="80.3" y="517" font-size="11" fill="#cdcdcd" textLength="5.65" lengthAdjust="spacingAndGlyphs">0</text><text x="80.3" y="527" font-size="11" fill="#cdcdcd" textLength="5.65" lengthAdjust="spacingAndGlyphs">0</text><rect x="78" y="584" width="16" height="1" fill="#8c8c8c"/><rect x="90" y="594" width="4" height="1" fill="#8c8c8c"/><rect x="90" y="604" width="4" height="1" fill="#8c8c8c"/><rect x="90" y="614" width="4" height="1" fill="#8c8c8c"/><rect x="90" y="624" width="4" height="1" fill="#8c8c8c"/><text x="80.3" y="557" font-size="11" fill="#cdcdcd" textLength="5.65" lengthAdjust="spacingAndGlyphs">6</text><text x="80.3" y="567" font-size="11" fill="#cdcdcd" textLength="5.65" lengthAdjust="spacingAndGlyphs">0</text><text x="80.3" y="577" font-size="11" fill="#cdcdcd" textLength="5.65" lengthAdjust="spacingAndGlyphs">0</text><rect x="78" y="634" width="16" height="1" fill="#8c8c8c"/><rect x="90" y="644" width="4" height="1" fill="#8c8c8c"/><rect x="90" y="654" width="4" height="1" fill="#8c8c8c"/><rect x="90" y="664" width="4" height="1" fill="#8c8c8c"/><rect x="90" y="674" width="4" height="1" fill="#8c8c8c"/><text x="80.3" y="607" font-size="11" fill="#cdcdcd" textLength="5.65" lengthAdjust="spacingAndGlyphs">7</text><text x="80.3" y="617" font-size="11" fill="#cdcdcd" textLength="5.65" lengthAdjust="spacingAndGlyphs">0</text><text x="80.3" y="627" font-size="11" fill="#cdcdcd" textLength="5.65" lengthAdjust="spacingAndGlyphs">0</text><rect x="78" y="684" width="16" height="1" fill="#8c8c8c"/><rect x="90" y="694" width="4" height="1" fill="#8c8c8c"/><rect x="90" y="704" width="4" height="1" fill="#8c8c8c"/><rect x="90" y="714" width="4" height="1" fill="#8c8c8c"/><rect x="90" y="724" width="4" height="1" fill="#8c8c8c"/><text x="80.3" y="657" font-size="11" fill="#cdcdcd" textLength="5.65" lengthAdjust="spacingAndGlyphs">8</text><text x="80.3" y="667" font-size="11" fill="#cdcdcd" textLength="5.65" lengthAdjust="spacingAndGlyphs">0</text><text x="80.3" y="677" font-size="11" fill="#cdcdcd" textLength="5.65" lengthAdjust="spacingAndGlyphs">0</text><rect x="78" y="734" width="16" height="1" fill="#8c8c8c"/><rect x="90" y="744" width="4" height="1" fill="#8c8c8c"/><rect x="90" y="754" width="4" height="1" fill="#8c8c8c"/><rect x="90" y="764" width="4" height="1" fill="#8c8c8c"/><rect x="90" y="774" width="4" height="1" fill="#8c8c8c"/><text x="80.3" y="707" font-size="11" fill="#cdcdcd" textLength="5.65" lengthAdjust="spacingAndGlyphs">9</text><text x="80.3" y="717" font-size="11" fill="#cdcdcd" textLength="5.65" lengthAdjust="spacingAndGlyphs">0</text><text x="80.3" y="727" font-size="11" fill="#cdcdcd" textLength="5.65" lengthAdjust="spacingAndGlyphs">0</text><rect x="78" y="784" width="16" height="1" fill="#8c8c8c"/><rect x="90" y="794" width="4" height="1" fill="#8c8c8c"/><rect x="90" y="804" width="4" height="1" fill="#8c8c8c"/><rect x="90" y="814" width="4" height="1" fill="#8c8c8c"/><rect x="90" y="824" width="4" height="1" fill="#8c8c8c"/><text x="80.3" y="747" font-size="11" fill="#cdcdcd" textLength="5.65" lengthAdjust="spacingAndGlyphs">1</text><text x="80.3" y="757" font-size="11" fill="#cdcdcd" textLength="5.65" lengthAdjust="spacingAndGlyphs">0</text><text x="80.3" y="767" font-size="11" fill="#cdcdcd" textLength="5.65" lengthAdjust="spacingAndGlyphs">0</text><text x="80.3" y="777" font-size="11" fill="#cdcdcd" textLength="5.65" lengthAdjust="spacingAndGlyphs">0</text><rect x="78" y="834" width="16" height="1" fill="#8c8c8c"/><rect x="90" y="844" width="4" height="1" fill="#8c8c8c"/><rect x="90" y="854" width="4" height="1" fill="#8c8c8c"/><rect x="90" y="864" width="4" height="1" fill="#8c8c8c"/><rect x="90" y="874" width="4" height="1" fill="#8c8c8c"/><text x="80.3" y="797" font-size="11" fill="#cdcdcd" textLength="5.65" lengthAdjust="spacingAndGlyphs">1</text><text x="80.3" y="807" font-size="11" fill="#cdcdcd" textLength="5.65" lengthAdjust="spacingAndGlyphs">1</text><text x="80.3" y="817" font-size="11" fill="#cdcdcd" textLength="5.65" lengthAdjust="spacingAndGlyphs">0</text><text x="80.3" y="827" font-size="11" fill="#cdcdcd" textLength="5.65" lengthAdjust="spacingAndGlyphs">0</text><rect x="78" y="884" width="16" height="1" fill="#8c8c8c"/><rect x="90" y="894" width="4" height="1" fill="#8c8c8c"/><rect x="90" y="904" width="4" height="1" fill="#8c8c8c"/><rect x="90" y="914" width="4" height="1" fill="#8c8c8c"/><rect x="90" y="924" width="4" height="1" fill="#8c8c8c"/><text x="80.3" y="847" font-size="11" fill="#cdcdcd" textLength="5.65" lengthAdjust="spacingAndGlyphs">1</text><text x="80.3" y="857" font-size="11" fill="#cdcdcd" textLength="5.65" lengthAdjust="spacingAndGlyphs">2</text><text x="80.3" y="867" font-size="11" fill="#cdcdcd" textLength="5.65" lengthAdjust="spacingAndGlyphs">0</text><text x="80.3" y="877" font-size="11" fill="#cdcdcd" textLength="5.65" lengthAdjust="spacingAndGlyphs">0</text></svg>
<div style="left:78px;top:63px;width:16px;height:21px;background:#323232;"></div>
<svg style="left:78px;top:63px" width="16" height="21"><path d="M4.5 1 V17 M0 4.5 H16" stroke="#8c8c8c" stroke-width="1" fill="none"/><path d="M0 19.5 H16" stroke="#a0a0a0" stroke-width="1" stroke-dasharray="1 1"/></svg>
<div style="left:78px;top:931px;width:1410px;height:16px;background:#4a4a4a;"></div>
<div style="left:78px;top:931px;width:432px;height:16px;background:#535353;"></div>
<div style="left:1470px;top:931px;width:16px;height:16px;background:#535353;"></div>
<div style="left:82px;top:932px;width:50px;height:15px;background:#424242;border-radius:2px 0 0 2px;"></div>
<div style="left:84px;top:934px;font-size:12px;color:#f0f0f0;line-height:16px;white-space:nowrap;font-family:'Liberation Mono','Noto Sans CJK SC',monospace;line-height:14px;letter-spacing:-1.2px;">50%</div>
<div style="left:133px;top:932px;width:17px;height:15px;background:#484848;"></div>
<svg style="left:135px;top:937px" width="12" height="8"><path d="M1.5 1.5 L5.5 5.5 L9.5 1.5" fill="none" stroke="#e8e8e8" stroke-width="1.5"/></svg>
<div style="left:150px;top:932px;width:42px;height:15px;background:#4d4d4d;"></div>
<svg style="left:158px;top:934px" width="30" height="12"><rect x="1" y="1" width="1.6" height="9" fill="#7a7a7a"/><path d="M10 1 V10 L4 5.5 Z" fill="#7a7a7a"/><path d="M26 1 V10 L20 5.5 Z" fill="#7a7a7a"/></svg>
<div style="left:192px;top:932px;width:40px;height:15px;background:#424242;"></div>
<div style="left:195px;top:934px;font-size:12px;color:#f0f0f0;line-height:16px;white-space:nowrap;font-family:'Liberation Mono','Noto Sans CJK SC',monospace;line-height:14px;">1</div>
<div style="left:233px;top:932px;width:17px;height:15px;background:#484848;"></div>
<svg style="left:235px;top:937px" width="12" height="8"><path d="M1.5 1.5 L5.5 5.5 L9.5 1.5" fill="none" stroke="#e8e8e8" stroke-width="1.5"/></svg>
<div style="left:250px;top:932px;width:41px;height:15px;background:#4d4d4d;"></div>
<svg style="left:258px;top:934px" width="30" height="12"><path d="M2 1 V10 L8 5.5 Z" fill="#7a7a7a"/><path d="M17 1 V10 L23 5.5 Z" fill="#7a7a7a"/><rect x="23.5" y="1" width="1.6" height="9" fill="#7a7a7a"/></svg>
<div style="left:291px;top:932px;width:1px;height:15px;background:#444;"></div>
<div style="left:380px;top:934px;font-size:12px;color:#bdbdbd;line-height:16px;white-space:nowrap;font-family:'Liberation Sans','Noto Sans CJK SC',sans-serif;line-height:16px;">选择</div>
<svg style="left:497px;top:934px" width="8" height="12"><path d="M1 1 V10 L7 5.5 Z" fill="#d8d8d8"/></svg>
<svg style="left:514px;top:934px" width="8" height="12"><path d="M6 1.5 L2 5.5 L6 9.5" fill="none" stroke="#a4a4a4" stroke-width="1.3"/></svg>
<svg style="left:1457px;top:934px" width="8" height="12"><path d="M2 1.5 L6 5.5 L2 9.5" fill="none" stroke="#a4a4a4" stroke-width="1.3"/></svg>
<div style="left:965px;top:932px;width:25px;height:15px;background:#5f5f5f;border-radius:7.5px;"></div>
<div style="left:0px;top:947px;width:1784px;height:1px;background:#3c3c3c;"></div>
<div style="left:1246px;top:44px;width:242px;height:182px;background:#535353;box-shadow:-1px 1px 3px rgba(0,0,0,0.25);"></div>
<div style="left:1246px;top:44px;width:243px;height:4px;background:#3a3a3a;"></div>
<div style="left:1246px;top:48px;width:241px;height:26px;background:#424242;"></div>
<div style="left:1247px;top:48px;width:42px;height:26px;background:#535353;"></div>
<div style="left:1246px;top:44px;width:1px;height:182px;background:#3c3c3c;"></div>
<div style="left:1487px;top:44px;width:2px;height:182px;background:#3a3a3a;"></div>
<div style="left:1246px;top:217px;width:242px;height:2px;background:#3a3a3a;"></div>
<div style="left:1246px;top:225px;width:242px;height:1px;background:#3a3a3a;"></div>
<svg style="left:1357px;top:220px" width="20" height="4"><rect x="0" y="0" width="1" height="4" fill="#333"/><rect x="2" y="0" width="1" height="4" fill="#333"/><rect x="4" y="0" width="1" height="4" fill="#333"/><rect x="6" y="0" width="1" height="4" fill="#333"/><rect x="8" y="0" width="1" height="4" fill="#333"/><rect x="10" y="0" width="1" height="4" fill="#333"/><rect x="12" y="0" width="1" height="4" fill="#333"/><rect x="14" y="0" width="1" height="4" fill="#333"/><rect x="16" y="0" width="1" height="4" fill="#333"/><rect x="18" y="0" width="1" height="4" fill="#333"/></svg>
<div style="left:1256px;top:54px;font-size:12px;color:#e6e6e6;line-height:16px;white-space:nowrap;font-family:'Liberation Sans','Noto Sans CJK SC',sans-serif;line-height:17px;letter-spacing:0.4px;">外观</div>
<svg style="left:1446px;top:55px" width="40" height="14"><path d="M1.2 4.2 L4 7 L1.2 9.8 M5.8 4.2 L8.6 7 L5.8 9.8" fill="none" stroke="#e0e0e0" stroke-width="1.7"/><path d="M17.3 0.8 V12.2" stroke="#c8c8c8" stroke-width="1.2"/><path d="M25 3.5 H35 M25 5.5 H35 M25 7.5 H35 M25 9.5 H35" stroke="#dcdcdc" stroke-width="1"/></svg>
<div style="left:1252px;top:81px;width:230px;height:117px;border:1px solid #606060;border-radius:3px;overflow:hidden;"></div>
<div style="left:1253px;top:106px;width:217px;height:1px;background:#474747;"></div>
<div style="left:1253px;top:131px;width:217px;height:1px;background:#474747;"></div>
<div style="left:1253px;top:156px;width:217px;height:1px;background:#474747;"></div>
<div style="left:1253px;top:181px;width:217px;height:1px;background:#474747;"></div>
<div style="left:1277px;top:107px;width:1px;height:90px;background:#3e3e3e;"></div>
<div style="left:1255px;top:84px;width:20px;height:20px;background:#000;box-shadow:inset 0 0 0 2px #fff;"></div>
<div style="left:1303px;top:88px;font-size:12px;color:#e8e8e8;line-height:16px;white-space:nowrap;font-family:'Liberation Sans','Noto Sans CJK SC',sans-serif;font-weight:bold;line-height:17px;">路径</div>
<svg style="left:1257px;top:114px" width="15" height="10" viewBox="0 0 15 10"><path d="M0.5 5 C3 0.5 12 0.5 14.5 5 C12 9.5 3 9.5 0.5 5 Z" fill="#d8d8d8"/><circle cx="7.5" cy="5" r="2.6" fill="#535353"/><circle cx="7.5" cy="5" r="1.3" fill="#d8d8d8"/></svg>
<svg style="left:1284px;top:116px" width="9" height="6"><path d="M1 1 L4.5 5 L8 1" fill="none" stroke="#e0e0e0" stroke-width="1.4"/></svg>
<div style="left:1303px;top:112px;font-size:12px;color:#e8e8e8;line-height:16px;white-space:nowrap;font-family:'Liberation Sans','Noto Sans CJK SC',sans-serif;line-height:17px;border-bottom:1px dotted #c8c8c8;height:16px;">描边 :</div>
<svg style="left:1345px;top:110px" width="18" height="18"><rect x="0.5" y="0.5" width="17" height="17" fill="#fff" stroke="#222"/><rect x="2.5" y="2.5" width="13" height="13" fill="#fff" stroke="#222"/><path d="M4.5 13.5 L13.5 4.5" stroke="#e0102a" stroke-width="2.2"/></svg>
<svg style="left:1257px;top:139px" width="15" height="10" viewBox="0 0 15 10"><path d="M0.5 5 C3 0.5 12 0.5 14.5 5 C12 9.5 3 9.5 0.5 5 Z" fill="#6e6e6e"/><circle cx="7.5" cy="5" r="2.6" fill="#535353"/><circle cx="7.5" cy="5" r="1.3" fill="#6e6e6e"/></svg>
<div style="left:1326px;top:137px;font-size:12px;color:#e8e8e8;line-height:16px;white-space:nowrap;font-family:'Liberation Sans','Noto Sans CJK SC',sans-serif;line-height:17px;border-bottom:1px dotted #c8c8c8;height:16px;">不透明度 :</div>
<div style="left:1387px;top:137px;font-size:12px;color:#e8e8e8;line-height:16px;white-space:nowrap;font-family:'Liberation Sans','Noto Sans CJK SC',sans-serif;line-height:17px;">默认值</div>
<svg style="left:1257px;top:164px" width="15" height="10" viewBox="0 0 15 10"><path d="M0.5 5 C3 0.5 12 0.5 14.5 5 C12 9.5 3 9.5 0.5 5 Z" fill="#d8d8d8"/><circle cx="7.5" cy="5" r="2.6" fill="#535353"/><circle cx="7.5" cy="5" r="1.3" fill="#d8d8d8"/></svg>
<svg style="left:1284px;top:166px" width="9" height="6"><path d="M1 1 L4.5 5 L8 1" fill="none" stroke="#e0e0e0" stroke-width="1.4"/></svg>
<div style="left:1303px;top:162px;font-size:12px;color:#e8e8e8;line-height:16px;white-space:nowrap;font-family:'Liberation Sans','Noto Sans CJK SC',sans-serif;line-height:17px;">填色 :</div>
<svg style="left:1345px;top:160px" width="18" height="18"><rect x="0.5" y="0.5" width="17" height="17" fill="#fff" stroke="#222"/><rect x="2.5" y="2.5" width="13" height="13" fill="#fff" stroke="#111"/><rect x="4.5" y="4.5" width="9" height="9" fill="#000"/></svg>
<div style="left:1253px;top:182px;width:217px;height:15px;overflow:hidden;"><svg style="left:4px;top:8px" width="15" height="10" viewBox="0 0 15 10"><path d="M0.5 5 C3 0.5 12 0.5 14.5 5 C12 9.5 3 9.5 0.5 5 Z" fill="#6e6e6e"/><circle cx="7.5" cy="5" r="2.6" fill="#535353"/><circle cx="7.5" cy="5" r="1.3" fill="#6e6e6e"/></svg>
<div style="left:73px;top:6.5px;font-size:12px;color:#e8e8e8;line-height:16px;white-space:nowrap;font-family:'Liberation Sans','Noto Sans CJK SC',sans-serif;line-height:17px;">不透明度 :</div>
<div style="left:134px;top:6.5px;font-size:12px;color:#e8e8e8;line-height:16px;white-space:nowrap;font-family:'Liberation Sans','Noto Sans CJK SC',sans-serif;line-height:17px;">默认值</div>
</div>
<div style="left:1470px;top:82px;width:11px;height:11px;background:#4b4b4b;border-radius:0 2px 0 0;"></div>
<div style="left:1470px;top:186px;width:11px;height:11px;background:#4b4b4b;border-radius:0 0 2px 0;"></div>
<svg style="left:1471px;top:85px" width="10" height="6"><path d="M1 5 L5.0 1 L9 5" fill="none" stroke="#c8c8c8" stroke-width="1.3"/></svg>
<svg style="left:1471px;top:188px" width="10" height="6"><path d="M1 1 L5.0 5 L9 1" fill="none" stroke="#c8c8c8" stroke-width="1.3"/></svg>
<div style="left:1470px;top:94px;width:10px;height:71px;background:#5f5f5f;border-radius:5px;"></div>
<svg style="left:1258px;top:201px" width="13" height="13"><rect x="1.9" y="1.7" width="9.4" height="9.4" fill="none" stroke="#d0d0d0" stroke-width="2"/></svg>
<svg style="left:1284px;top:201px" width="13" height="13"><rect x="1.3" y="1.2" width="10.4" height="10.4" fill="none" stroke="#d0d0d0" stroke-width="1"/><rect x="3" y="3" width="7" height="7" fill="#c8c8c8"/></svg>
<div style="left:1310px;top:197px;font-size:14px;color:#c6c6c6;line-height:18px;white-space:nowrap;font-family:'Liberation Sans','Noto Sans CJK SC',sans-serif;font-style:italic;line-height:18px;letter-spacing:-0.5px;">fx</div>
<svg style="left:1323px;top:210px" width="4" height="3"><path d="M0 0 H3.4 L1.7 2.4 Z" fill="#c6c6c6"/></svg>
<svg style="left:1395px;top:201px" width="14" height="14"><circle cx="6.7" cy="6.7" r="4.7" fill="none" stroke="#d0d0d0" stroke-width="1.9"/><path d="M3.4 3.4 L10 10" stroke="#d0d0d0" stroke-width="1.9"/></svg>
<svg style="left:1423px;top:201px" width="12" height="12"><path d="M0.6 1 H10 V10.6 H5.6 V6 H0.6 Z" fill="#6e6e6e"/><path d="M0.8 6.4 H5.2 V10.4 Z" fill="#636363"/></svg>
<svg style="left:1447.6px;top:200px" width="12.4" height="14.3" viewBox="0 0 13 15"><path d="M1 3.5 H12 M4.5 3 V1.5 H8.5 V3" fill="none" stroke="#d0d0d0" stroke-width="1.2"/><path d="M2.5 4.5 V13.5 H10.5 V4.5" fill="none" stroke="#d0d0d0" stroke-width="1.2"/><path d="M4.8 5.5 V12 M6.5 5.5 V12 M8.2 5.5 V12" stroke="#d0d0d0" stroke-width="0.9"/></svg>
<div style="left:1488px;top:35px;width:1px;height:913px;background:#3a3a3a;"></div>
<div style="left:1489px;top:35px;width:290px;height:12px;background:#424242;"></div>
<div style="left:1489px;top:46px;width:290px;height:1px;background:#383838;"></div>
<svg style="left:1512px;top:37px" width="10" height="8"><path d="M4 1 L1.2 3.6 L4 6.2 M7.8 1 L5 3.6 L7.8 6.2" fill="none" stroke="#d6d6d6" stroke-width="1.5"/></svg>
<svg style="left:1765px;top:37px" width="10" height="8"><path d="M1.2 1 L4 3.6 L1.2 6.2 M5 1 L7.8 3.6 L5 6.2" fill="none" stroke="#d6d6d6" stroke-width="1.5"/></svg>
<div style="left:1489px;top:47px;width:37px;height:900px;background:#535353;"></div>
<div style="left:1526px;top:47px;width:1px;height:900px;background:#3e3e3e;"></div>
<div style="left:1527px;top:47px;width:1px;height:900px;background:#4e4e4e;"></div>
<div style="left:1528px;top:47px;width:1px;height:900px;background:#3e3e3e;"></div>
<div style="left:1489px;top:87px;width:37px;height:1px;background:#3a3a3a;"></div>
<div style="left:1489px;top:184px;width:37px;height:1px;background:#3a3a3a;"></div>
<div style="left:1489px;top:225px;width:37px;height:1px;background:#3a3a3a;"></div>
<div style="left:1489px;top:266px;width:37px;height:1px;background:#3a3a3a;"></div>
<div style="left:1489px;top:307px;width:37px;height:1px;background:#3a3a3a;"></div>
<div style="left:1489px;top:348px;width:37px;height:1px;background:#3a3a3a;"></div>
<svg style="left:1498px;top:50px" width="20" height="4"><rect x="0" y="0" width="1" height="4" fill="#3a3a3a"/><rect x="2" y="0" width="1" height="4" fill="#3a3a3a"/><rect x="4" y="0" width="1" height="4" fill="#3a3a3a"/><rect x="6" y="0" width="1" height="4" fill="#3a3a3a"/><rect x="8" y="0" width="1" height="4" fill="#3a3a3a"/><rect x="10" y="0" width="1" height="4" fill="#3a3a3a"/><rect x="12" y="0" width="1" height="4" fill="#3a3a3a"/><rect x="14" y="0" width="1" height="4" fill="#3a3a3a"/><rect x="16" y="0" width="1" height="4" fill="#3a3a3a"/><rect x="18" y="0" width="1" height="4" fill="#3a3a3a"/></svg>
<svg style="left:1498px;top:91px" width="20" height="4"><rect x="0" y="0" width="1" height="4" fill="#3a3a3a"/><rect x="2" y="0" width="1" height="4" fill="#3a3a3a"/><rect x="4" y="0" width="1" height="4" fill="#3a3a3a"/><rect x="6" y="0" width="1" height="4" fill="#3a3a3a"/><rect x="8" y="0" width="1" height="4" fill="#3a3a3a"/><rect x="10" y="0" width="1" height="4" fill="#3a3a3a"/><rect x="12" y="0" width="1" height="4" fill="#3a3a3a"/><rect x="14" y="0" width="1" height="4" fill="#3a3a3a"/><rect x="16" y="0" width="1" height="4" fill="#3a3a3a"/><rect x="18" y="0" width="1" height="4" fill="#3a3a3a"/></svg>
<svg style="left:1498px;top:188px" width="20" height="4"><rect x="0" y="0" width="1" height="4" fill="#3a3a3a"/><rect x="2" y="0" width="1" height="4" fill="#3a3a3a"/><rect x="4" y="0" width="1" height="4" fill="#3a3a3a"/><rect x="6" y="0" width="1" height="4" fill="#3a3a3a"/><rect x="8" y="0" width="1" height="4" fill="#3a3a3a"/><rect x="10" y="0" width="1" height="4" fill="#3a3a3a"/><rect x="12" y="0" width="1" height="4" fill="#3a3a3a"/><rect x="14" y="0" width="1" height="4" fill="#3a3a3a"/><rect x="16" y="0" width="1" height="4" fill="#3a3a3a"/><rect x="18" y="0" width="1" height="4" fill="#3a3a3a"/></svg>
<svg style="left:1498px;top:229px" width="20" height="4"><rect x="0" y="0" width="1" height="4" fill="#3a3a3a"/><rect x="2" y="0" width="1" height="4" fill="#3a3a3a"/><rect x="4" y="0" width="1" height="4" fill="#3a3a3a"/><rect x="6" y="0" width="1" height="4" fill="#3a3a3a"/><rect x="8" y="0" width="1" height="4" fill="#3a3a3a"/><rect x="10" y="0" width="1" height="4" fill="#3a3a3a"/><rect x="12" y="0" width="1" height="4" fill="#3a3a3a"/><rect x="14" y="0" width="1" height="4" fill="#3a3a3a"/><rect x="16" y="0" width="1" height="4" fill="#3a3a3a"/><rect x="18" y="0" width="1" height="4" fill="#3a3a3a"/></svg>
<svg style="left:1498px;top:270px" width="20" height="4"><rect x="0" y="0" width="1" height="4" fill="#3a3a3a"/><rect x="2" y="0" width="1" height="4" fill="#3a3a3a"/><rect x="4" y="0" width="1" height="4" fill="#3a3a3a"/><rect x="6" y="0" width="1" height="4" fill="#3a3a3a"/><rect x="8" y="0" width="1" height="4" fill="#3a3a3a"/><rect x="10" y="0" width="1" height="4" fill="#3a3a3a"/><rect x="12" y="0" width="1" height="4" fill="#3a3a3a"/><rect x="14" y="0" width="1" height="4" fill="#3a3a3a"/><rect x="16" y="0" width="1" height="4" fill="#3a3a3a"/><rect x="18" y="0" width="1" height="4" fill="#3a3a3a"/></svg>
<svg style="left:1498px;top:311px" width="20" height="4"><rect x="0" y="0" width="1" height="4" fill="#3a3a3a"/><rect x="2" y="0" width="1" height="4" fill="#3a3a3a"/><rect x="4" y="0" width="1" height="4" fill="#3a3a3a"/><rect x="6" y="0" width="1" height="4" fill="#3a3a3a"/><rect x="8" y="0" width="1" height="4" fill="#3a3a3a"/><rect x="10" y="0" width="1" height="4" fill="#3a3a3a"/><rect x="12" y="0" width="1" height="4" fill="#3a3a3a"/><rect x="14" y="0" width="1" height="4" fill="#3a3a3a"/><rect x="16" y="0" width="1" height="4" fill="#3a3a3a"/><rect x="18" y="0" width="1" height="4" fill="#3a3a3a"/></svg>
<div style="left:1494px;top:59px;width:28px;height:23px;background:#2e2e2e;border-radius:3px;border:1px solid #3c3c3c;"></div>
<svg style="left:1498px;top:60px" width="21" height="21"><circle cx="10.5" cy="10.5" r="6" fill="#b8b8b8"/><circle cx="10.5" cy="10.5" r="8.5" fill="none" stroke="#c8c8c8" stroke-width="1.2" stroke-dasharray="2.2 1.6"/></svg>
<svg style="left:1500px;top:105px" width="17" height="13"><rect x="0" y="0.5" width="16.5" height="11.5" fill="#c0c0c0"/><rect x="1.5" y="2" width="4" height="3.5" fill="#8a8a8a"/><rect x="6.5" y="2" width="4" height="3.5" fill="#c0c0c0"/><rect x="11.5" y="2" width="4" height="3.5" fill="#7c7c7c"/><rect x="1.5" y="7" width="4" height="3.5" fill="#8a8a8a"/><rect x="6.5" y="7" width="4" height="3.5" fill="#8a8a8a"/><rect x="11.5" y="7" width="4" height="3.5" fill="#a0a0a0"/></svg>
<svg style="left:1500px;top:128px" width="18" height="22" viewBox="0 0 18 22"><path d="M4 12 H12 V21 H4 Z" fill="#c0c0c0"/><path d="M5 12 C3 9 1.5 6 3 4 C5 5 6 9 6.5 12 Z" fill="#c0c0c0"/><path d="M7 12 L6.5 3 C6.5 0.5 9 0.5 9 3 L9.5 12 Z" fill="#c0c0c0"/><path d="M10 12 C10.5 8 12 5 15 5 C17 6 16.5 8 14 8.5 C12.5 9 12 10.5 11.5 12 Z" fill="#c0c0c0"/></svg>
<svg style="left:1499px;top:158px" width="19" height="19" viewBox="0 0 19 19"><circle cx="9.5" cy="5.2" r="4.2" fill="#c0c0c0"/><circle cx="5" cy="10.8" r="4.2" fill="#c0c0c0"/><circle cx="14" cy="10.8" r="4.2" fill="#c0c0c0"/><path d="M9.5 8 C9.5 14 8 16.5 5.5 17.5 H13.5 C11 16.5 9.5 14 9.5 8 Z" fill="#c0c0c0"/><rect x="8" y="8" width="3" height="5" fill="#c0c0c0"/></svg>
<svg style="left:1500px;top:201px" width="18" height="14"><defs><linearGradient id="dg" x1="0" x2="1"><stop offset="0" stop-color="#555"/><stop offset="1" stop-color="#bdbdbd"/></linearGradient></defs><rect x="0.6" y="1.1" width="16" height="11" fill="url(#dg)" stroke="#c6c6c6" stroke-width="1.2"/></svg>
<svg style="left:1500px;top:241px" width="17" height="17" viewBox="0 0 17 17"><rect x="2.5" y="2.5" width="11.5" height="11.5" fill="none" stroke="#c0c0c0" stroke-width="1.3"/><rect x="0.7" y="0.7" width="3.2" height="3.2" fill="#c0c0c0"/><rect x="0.7" y="6.6" width="3.2" height="3.2" fill="#c0c0c0"/><rect x="0.7" y="12.5" width="3.2" height="3.2" fill="#c0c0c0"/><rect x="6.6" y="0.7" width="3.2" height="3.2" fill="#c0c0c0"/><rect x="6.6" y="12.5" width="3.2" height="3.2" fill="#c0c0c0"/><rect x="12.5" y="0.7" width="3.2" height="3.2" fill="#c0c0c0"/><rect x="12.5" y="6.6" width="3.2" height="3.2" fill="#c0c0c0"/><rect x="12.5" y="12.5" width="3.2" height="3.2" fill="#c0c0c0"/><circle cx="8.2" cy="8.2" r="1" fill="#c0c0c0"/></svg>
<svg style="left:1500px;top:281px" width="17" height="20"><rect x="0.5" y="0" width="1.2" height="19" fill="#c0c0c0"/><rect x="3" y="2.5" width="8" height="5.5" fill="#c0c0c0"/><rect x="3" y="10.5" width="13" height="5.5" fill="#c0c0c0"/></svg>
<svg style="left:1500px;top:323px" width="17" height="17"><rect x="0.5" y="0.5" width="9" height="9" fill="#c0c0c0"/><rect x="6.5" y="6.5" width="9.5" height="9.5" fill="#c0c0c0"/><rect x="6" y="6" width="4" height="4" fill="#535353"/><rect x="7" y="7" width="3" height="3" fill="#a0a0a0"/></svg>
<div style="left:1529px;top:47px;width:250px;height:900px;background:#535353;"></div>
<div style="left:1779px;top:35px;width:1px;height:913px;background:#3a3a3a;"></div>
<div style="left:1529px;top:47px;width:250px;height:27px;background:#424242;"></div>
<div style="left:1529px;top:47px;width:42px;height:27px;background:#535353;"></div>
<div style="left:1613px;top:47px;width:1px;height:27px;background:#383838;"></div>
<div style="left:1653px;top:47px;width:1px;height:27px;background:#383838;"></div>
<div style="left:1571px;top:73px;width:208px;height:1px;background:#383838;"></div>
<div style="left:1539px;top:53px;font-size:12px;color:#f0f0f0;line-height:16px;white-space:nowrap;font-family:'Liberation Sans','Noto Sans CJK SC',sans-serif;line-height:17px;">属性</div>
<div style="left:1580px;top:53px;font-size:12px;color:#a6a6a6;line-height:16px;white-space:nowrap;font-family:'Liberation Sans','Noto Sans CJK SC',sans-serif;line-height:17px;">图层</div>
<div style="left:1622px;top:53px;font-size:12px;color:#a6a6a6;line-height:16px;white-space:nowrap;font-family:'Liberation Sans','Noto Sans CJK SC',sans-serif;line-height:17px;">库</div>
<div style="left:1539px;top:84px;font-size:10px;color:#b4b4b4;line-height:14px;white-space:nowrap;font-family:'Liberation Sans','Noto Sans CJK SC',sans-serif;line-height:15px;">矩形</div>
<div style="left:1529px;top:106px;width:250px;height:2px;background:#4a4a4a;"></div>
<div style="left:1539px;top:115px;font-size:10px;color:#b4b4b4;line-height:14px;white-space:nowrap;font-family:'Liberation Sans','Noto Sans CJK SC',sans-serif;line-height:15px;">变换</div>
<svg style="left:1539px;top:152px" width="19" height="19" viewBox="0 0 19 19"><path d="M2.5 2.5 H16.5 V16.5 H2.5 Z M2.5 9.5 H16.5 M9.5 2.5 V16.5" fill="none" stroke="#c0c0c0" stroke-width="0.9" stroke-dasharray="1 1"/><rect x="0.5" y="0.5" width="4" height="4" fill="#535353" stroke="#c6c6c6" stroke-width="0.9"/><rect x="0.5" y="7.5" width="4" height="4" fill="#535353" stroke="#c6c6c6" stroke-width="0.9"/><rect x="0.5" y="14.5" width="4" height="4" fill="#535353" stroke="#c6c6c6" stroke-width="0.9"/><rect x="7.5" y="0.5" width="4" height="4" fill="#535353" stroke="#c6c6c6" stroke-width="0.9"/><rect x="7.5" y="7.5" width="4" height="4" fill="#fff" stroke="#c6c6c6" stroke-width="0.9"/><rect x="7.5" y="14.5" width="4" height="4" fill="#535353" stroke="#c6c6c6" stroke-width="0.9"/><rect x="14.5" y="0.5" width="4" height="4" fill="#535353" stroke="#c6c6c6" stroke-width="0.9"/><rect x="14.5" y="7.5" width="4" height="4" fill="#535353" stroke="#c6c6c6" stroke-width="0.9"/><rect x="14.5" y="14.5" width="4" height="4" fill="#535353" stroke="#c6c6c6" stroke-width="0.9"/></svg>
<div style="left:1572px;top:142px;font-size:11px;color:#b4b4b4;line-height:15px;white-space:nowrap;font-family:'Liberation Mono','Noto Sans CJK SC',monospace;line-height:15px;letter-spacing:-1px;">X:</div>
<div style="left:1585px;top:138px;width:56px;height:20px;background:#434343;border:1px solid #5e5e5e;border-radius:3px;overflow:hidden;"><span style="position:absolute;left:4px;top:0;line-height:18px;font-size:12px;color:#eaeaea;white-space:nowrap;font-family:'Liberation Mono','Noto Sans CJK SC',monospace;letter-spacing:-1.35px;">660 px</span></div>
<div style="left:1572px;top:168px;font-size:11px;color:#b4b4b4;line-height:15px;white-space:nowrap;font-family:'Liberation Mono','Noto Sans CJK SC',monospace;line-height:15px;letter-spacing:-1px;">Y:</div>
<div style="left:1585px;top:164px;width:56px;height:20px;background:#434343;border:1px solid #5e5e5e;border-radius:3px;overflow:hidden;"><span style="position:absolute;left:4px;top:0;line-height:18px;font-size:12px;color:#eaeaea;white-space:nowrap;font-family:'Liberation Mono','Noto Sans CJK SC',monospace;letter-spacing:-1.35px;">663.17 p</span></div>
<div style="left:1657px;top:142px;font-size:10px;color:#b4b4b4;line-height:14px;white-space:nowrap;font-family:'Liberation Sans','Noto Sans CJK SC',sans-serif;line-height:15px;">宽 :</div>
<div style="left:1677px;top:138px;width:56px;height:20px;background:#434343;border:1px solid #5e5e5e;border-radius:3px;overflow:hidden;"><span style="position:absolute;left:4px;top:0;line-height:18px;font-size:12px;color:#eaeaea;white-space:nowrap;font-family:'Liberation Mono','Noto Sans CJK SC',monospace;letter-spacing:-1.35px;">182 px</span></div>
<div style="left:1657px;top:168px;font-size:10px;color:#b4b4b4;line-height:14px;white-space:nowrap;font-family:'Liberation Sans','Noto Sans CJK SC',sans-serif;line-height:15px;">高 :</div>
<div style="left:1677px;top:164px;width:56px;height:20px;background:#434343;border:1px solid #5e5e5e;border-radius:3px;overflow:hidden;"><span style="position:absolute;left:4px;top:0;line-height:18px;font-size:12px;color:#eaeaea;white-space:nowrap;font-family:'Liberation Mono','Noto Sans CJK SC',monospace;letter-spacing:-1.35px;">956.24 p</span></div>
<svg style="left:1566px;top:194px" width="16" height="13"><path d="M1 10.5 H11.5 M1 10.5 L9 2" fill="none" stroke="#c0c0c0" stroke-width="1.3"/><path d="M5.5 5.5 A5 5 0 0 1 8 10.5" fill="none" stroke="#c0c0c0" stroke-width="1.1"/><rect x="13.5" y="4" width="1.4" height="1.6" fill="#c0c0c0"/><rect x="13.5" y="9" width="1.4" height="1.6" fill="#c0c0c0"/></svg>
<div style="left:1585px;top:190px;width:56px;height:21px;background:#434343;border:1px solid #5e5e5e;border-radius:3px;overflow:hidden;"><span style="position:absolute;left:3px;top:0;line-height:19px;font-size:12px;color:#eaeaea;white-space:nowrap;font-family:'Liberation Mono','Noto Sans CJK SC',monospace;letter-spacing:-1.35px;">0°</span></div>
<div style="left:1622px;top:191px;width:18px;height:19px;background:#474747;border-left:1px solid #5e5e5e;border-radius:0 2px 2px 0;"></div>
<svg style="left:1626px;top:198px" width="9" height="6"><path d="M1 1 L4.5 5 L8 1" fill="none" stroke="#e0e0e0" stroke-width="1.4"/></svg>
<svg style="left:1681px;top:195px" width="16" height="14"><path d="M1 1.5 V11.5 L5.5 6.5 Z" fill="none" stroke="#c6c6c6" stroke-width="1"/><path d="M14 1 V12 L9 6.5 Z" fill="#c6c6c6"/><path d="M7.3 0 V13" stroke="#c6c6c6" stroke-width="1" stroke-dasharray="1 1"/></svg>
<svg style="left:1711px;top:194px" width="14" height="16"><path d="M1.5 1 H11.5 L6.5 6 Z" fill="#c6c6c6"/><path d="M2 14.5 H11 L6.5 9.8 Z" fill="none" stroke="#c6c6c6" stroke-width="1"/><path d="M0 7.8 H13" stroke="#c6c6c6" stroke-width="1" stroke-dasharray="1 1"/></svg>
<svg style="left:1744px;top:153px" width="17" height="19" viewBox="0 0 17 19"><path d="M5.2 8.2 V5.5 A3.2 3.2 0 0 1 11.6 5.5 V7.2 M11.6 11.5 V13.3 A3.2 3.2 0 0 1 5.2 13.3 V11.8" fill="none" stroke="#c6c6c6" stroke-width="1.7"/><path d="M1 1.8 L15.5 16" stroke="#535353" stroke-width="3.4"/><path d="M1 1.8 L15.5 16" stroke="#c6c6c6" stroke-width="1.3"/></svg>
<svg style="left:1751px;top:222px" width="16" height="5"><circle cx="2.2" cy="2.5" r="1.9" fill="#c6c6c6"/><circle cx="7.5" cy="2.5" r="1.9" fill="#c6c6c6"/><circle cx="12.8" cy="2.5" r="1.9" fill="#c6c6c6"/></svg>
<div style="left:1529px;top:238px;width:250px;height:2px;background:#4a4a4a;"></div>
<div style="left:1539px;top:246px;font-size:10px;color:#b4b4b4;line-height:14px;white-space:nowrap;font-family:'Liberation Sans','Noto Sans CJK SC',sans-serif;line-height:15px;">外观</div>
<div style="left:1539px;top:269px;width:18px;height:18px;background:#000;border:1px solid #2a2a2a;box-shadow:inset 0 0 0 1.2px #fff;"></div>
<div style="left:1569px;top:271px;font-size:10px;color:#c8c8c8;line-height:14px;white-space:nowrap;font-family:'Liberation Sans','Noto Sans CJK SC',sans-serif;line-height:15px;">填色</div>
<svg style="left:1539px;top:298px" width="18" height="18"><rect x="0.5" y="0.5" width="17" height="17" fill="#fff" stroke="#2a2a2a"/><rect x="6" y="6" width="6" height="6" fill="#535353" stroke="#222" stroke-width="1"/><path d="M1 17 L17 1" stroke="#ff0000" stroke-width="1.8"/></svg>
<div style="left:1569px;top:300px;font-size:10px;color:#e0e0e0;line-height:14px;white-space:nowrap;font-family:'Liberation Sans','Noto Sans CJK SC',sans-serif;line-height:15px;border-bottom:1px dotted #c8c8c8;height:15px;">描边</div>
<div style="left:1618px;top:296px;width:70px;height:22px;background:#535353;border:1px solid #5e5e5e;border-radius:3px;"></div>
<div style="left:1637px;top:297px;width:33px;height:20px;background:#434343;border-left:1px solid #5e5e5e;border-right:1px solid #5e5e5e;"></div>
<svg style="left:1622px;top:300px" width="9" height="5.5"><path d="M1 4.5 L4.5 1 L8 4.5" fill="none" stroke="#e0e0e0" stroke-width="1.3"/></svg>
<svg style="left:1622px;top:309px" width="9" height="5.5"><path d="M1 1 L4.5 4.5 L8 1" fill="none" stroke="#e0e0e0" stroke-width="1.3"/></svg>
<svg style="left:1674px;top:305px" width="9" height="6"><path d="M1 1 L4.5 5 L8 1" fill="none" stroke="#e0e0e0" stroke-width="1.4"/></svg>
<svg style="left:1540px;top:328px" width="17" height="17"><rect x="0.5" y="0.5" width="16" height="16" fill="#777" stroke="#9a9a9a"/><rect x="1.0" y="1.0" width="3.75" height="3.75" fill="#969696"/><rect x="1.0" y="8.5" width="3.75" height="3.75" fill="#969696"/><rect x="4.75" y="4.75" width="3.75" height="3.75" fill="#969696"/><rect x="4.75" y="12.25" width="3.75" height="3.75" fill="#969696"/><rect x="8.5" y="1.0" width="3.75" height="3.75" fill="#969696"/><rect x="8.5" y="8.5" width="3.75" height="3.75" fill="#969696"/><rect x="12.25" y="4.75" width="3.75" height="3.75" fill="#969696"/><rect x="12.25" y="12.25" width="3.75" height="3.75" fill="#969696"/></svg>
<div style="left:1569px;top:329px;font-size:10px;color:#e0e0e0;line-height:14px;white-space:nowrap;font-family:'Liberation Sans','Noto Sans CJK SC',sans-serif;line-height:15px;border-bottom:1px dotted #c8c8c8;height:15px;">不透明度</div>
<div style="left:1618px;top:325px;width:70px;height:22px;background:#434343;border:1px solid #5e5e5e;border-radius:3px;"></div>
<div style="left:1669px;top:326px;width:18px;height:20px;background:#535353;border-left:1px solid #5e5e5e;border-radius:0 2px 2px 0;"></div>
<div style="left:1622px;top:328px;font-size:12px;color:#f0f0f0;line-height:16px;white-space:nowrap;font-family:'Liberation Mono','Noto Sans CJK SC',monospace;line-height:15px;letter-spacing:-1.2px;">100%</div>
<svg style="left:1674px;top:331px" width="7" height="10"><path d="M1.5 1 L5.5 5 L1.5 9" fill="none" stroke="#e0e0e0" stroke-width="1.4"/></svg>
<div style="left:1545px;top:356px;font-size:14px;color:#c6c6c6;line-height:18px;white-space:nowrap;font-family:'Liberation Sans','Noto Sans CJK SC',sans-serif;font-style:italic;line-height:18px;letter-spacing:-0.5px;">fx</div>
<svg style="left:1557px;top:369px" width="4" height="3"><path d="M0 0 H3.4 L1.7 2.4 Z" fill="#c6c6c6"/></svg>
<svg style="left:1751px;top:386px" width="16" height="5"><circle cx="2.2" cy="2.5" r="1.9" fill="#c6c6c6"/><circle cx="7.5" cy="2.5" r="1.9" fill="#c6c6c6"/><circle cx="12.8" cy="2.5" r="1.9" fill="#c6c6c6"/></svg>
<div style="left:1529px;top:401px;width:250px;height:2px;background:#4a4a4a;"></div>
<div style="left:1539px;top:415px;font-size:10px;color:#b4b4b4;line-height:14px;white-space:nowrap;font-family:'Liberation Sans','Noto Sans CJK SC',sans-serif;line-height:15px;">快速操作</div>
<div style="left:1539px;top:437px;width:100px;height:21px;border:1px solid #707070;border-radius:3px;text-align:center;font-size:10px;line-height:21px;color:#f0f0f0;font-weight:bold;">位移路径</div>
<div style="left:1649px;top:437px;width:100px;height:21px;border:1px solid #707070;border-radius:3px;text-align:center;font-size:10px;line-height:21px;color:#f0f0f0;font-weight:bold;">扩展形状</div>
<div style="left:1539px;top:468px;width:100px;height:21px;border:1px solid #707070;border-radius:3px;text-align:center;font-size:10px;line-height:21px;color:#f0f0f0;font-weight:bold;">排列</div>
<div style="left:1649px;top:468px;width:100px;height:21px;border:1px solid #707070;border-radius:3px;text-align:center;font-size:10px;line-height:21px;color:#f0f0f0;font-weight:bold;">对齐像素网格</div>
<div style="left:1539px;top:499px;width:210px;height:21px;border:1px solid #707070;border-radius:3px;text-align:center;font-size:10px;line-height:21px;color:#f0f0f0;font-weight:bold;">重新着色</div>
<div style="left:1114px;top:443px;width:298px;height:222px;background:#535353;box-shadow:0 0 11px 1px rgba(0,0,0,0.33);"></div>
<div style="left:1114px;top:672px;width:307px;height:2px;background:#383838;box-shadow:0 1px 3px rgba(0,0,0,0.45);border-radius:1px;"></div>
<div style="left:1419px;top:450px;width:2px;height:224px;background:#383838;box-shadow:1px 0 3px rgba(0,0,0,0.45);border-radius:1px;"></div>
<div style="left:1114px;top:443px;width:298px;height:222px;background:#535353;border:1px solid #1a84dd;"></div>
<div style="left:1115px;top:444px;width:296px;height:30px;background:#fff;"></div>
<div style="left:1123px;top:452px;font-size:12px;color:#000;line-height:16px;white-space:nowrap;font-family:'Liberation Sans','Noto Sans CJK SC',sans-serif;line-height:16px;">封套网格</div>
<div style="left:1130px;top:502px;width:266px;height:84px;border:1px solid #5f5f5f;border-radius:3px;"></div>
<div style="left:1137px;top:498px;width:33px;height:10px;background:#535353;"></div>
<div style="left:1141px;top:496px;font-size:12px;color:#bdbdbd;line-height:16px;white-space:nowrap;font-family:'Liberation Serif','Noto Serif CJK SC',serif;line-height:17px;letter-spacing:0.6px;">网格</div>
<div style="left:1141px;top:522px;font-size:12px;color:#bdbdbd;line-height:16px;white-space:nowrap;font-family:'Liberation Serif','Noto Serif CJK SC',serif;line-height:17px;letter-spacing:1.1px;">行数 (R):</div>
<div style="left:1141px;top:554px;font-size:12px;color:#bdbdbd;line-height:16px;white-space:nowrap;font-family:'Liberation Serif','Noto Serif CJK SC',serif;line-height:17px;letter-spacing:1.1px;">列数 (C):</div>
<div style="left:1199px;top:519px;width:70px;height:21px;background:#535353;border:1px solid #606060;border-radius:3px;"></div>
<div style="left:1217px;top:520px;width:51px;height:19px;background:#454545;border-left:1px solid #606060;border-radius:0 2px 2px 0;"></div>
<svg style="left:1203px;top:522px" width="9" height="5.5"><path d="M1 4.5 L4.5 1 L8 4.5" fill="none" stroke="#e0e0e0" stroke-width="1.3"/></svg>
<svg style="left:1203px;top:531px" width="9" height="5.5"><path d="M1 1 L4.5 4.5 L8 1" fill="none" stroke="#e0e0e0" stroke-width="1.3"/></svg>
<div style="left:1221px;top:521.5px;font-size:12px;color:#f0f0f0;line-height:16px;white-space:nowrap;font-family:'Liberation Mono','Noto Sans CJK SC',monospace;line-height:15px;">2</div>
<div style="left:1199px;top:550px;width:70px;height:21px;background:#535353;border:1.5px solid #3a8ee6;border-radius:3px;"></div>
<div style="left:1217px;top:551.5px;width:50.5px;height:18px;background:#fff;border-radius:0 2px 2px 0;"></div>
<svg style="left:1203px;top:553px" width="9" height="5.5"><path d="M1 4.5 L4.5 1 L8 4.5" fill="none" stroke="#e8e8e8" stroke-width="1.3"/></svg>
<svg style="left:1203px;top:562px" width="9" height="5.5"><path d="M1 1 L4.5 4.5 L8 1" fill="none" stroke="#e8e8e8" stroke-width="1.3"/></svg>
<div style="left:1221px;top:552.5px;font-size:12px;color:#000;line-height:16px;white-space:nowrap;font-family:'Liberation Mono','Noto Sans CJK SC',monospace;line-height:15px;">1</div>
<div style="left:1131px;top:614px;width:12px;height:12px;background:#c8c8c8;border-radius:2px;"></div>
<svg style="left:1131px;top:614px" width="12" height="12"><path d="M2.5 6 L5 8.7 L9.8 3" fill="none" stroke="#444" stroke-width="1.7"/></svg>
<div style="left:1148px;top:613px;font-size:12px;color:#d8d8d8;line-height:16px;white-space:nowrap;font-family:'Liberation Serif','Noto Serif CJK SC',serif;line-height:17px;letter-spacing:1.1px;">预览 (P)</div>
<div style="left:1207px;top:608px;width:92px;height:26px;border:2px solid #f4f4f4;border-radius:13px;text-align:center;line-height:23px;font-size:12px;color:#f4f4f4;font-family:'Liberation Serif','Noto Serif CJK SC',serif;letter-spacing:1px;">确定</div>
<div style="left:1304px;top:608px;width:92px;height:26px;border:1px solid #f4f4f4;border-radius:13px;text-align:center;line-height:25px;font-size:12px;color:#f4f4f4;font-family:'Liberation Serif','Noto Serif CJK SC',serif;letter-spacing:1px;">取消</div>
<div style="left:1120px;top:453px;width:289px;height:205px;border:2px solid #fe0000;"></div>
<div style="left:1622px;top:884px;font-size:31px;color:#121244;line-height:35px;white-space:nowrap;font-family:'Liberation Serif',serif;font-weight:bold;line-height:38px;letter-spacing:-0.25px;text-shadow:-1px -1px 0 #fff,1px -1px 0 #fff,-1px 1px 0 #fff,1px 1px 0 #fff,0 -1.5px 0 #fff,0 1.5px 0 #fff,-1.5px 0 0 #fff,1.5px 0 0 #fff;">fe<span style="color:#f08200">v</span>te.com</div>
<div style="left:1652px;top:912px;font-size:24px;color:#121244;line-height:28px;white-space:nowrap;font-family:'Liberation Sans','Noto Sans CJK SC',sans-serif;font-weight:900;line-height:30px;letter-spacing:0px;text-shadow:-1px -1px 0 #fff,1px -1px 0 #fff,-1px 1px 0 #fff,1px 1px 0 #fff,0 -1.5px 0 #fff,0 1.5px 0 #fff,-1.5px 0 0 #fff,1.5px 0 0 #fff;">飞特教程网</div>
</body></html>
